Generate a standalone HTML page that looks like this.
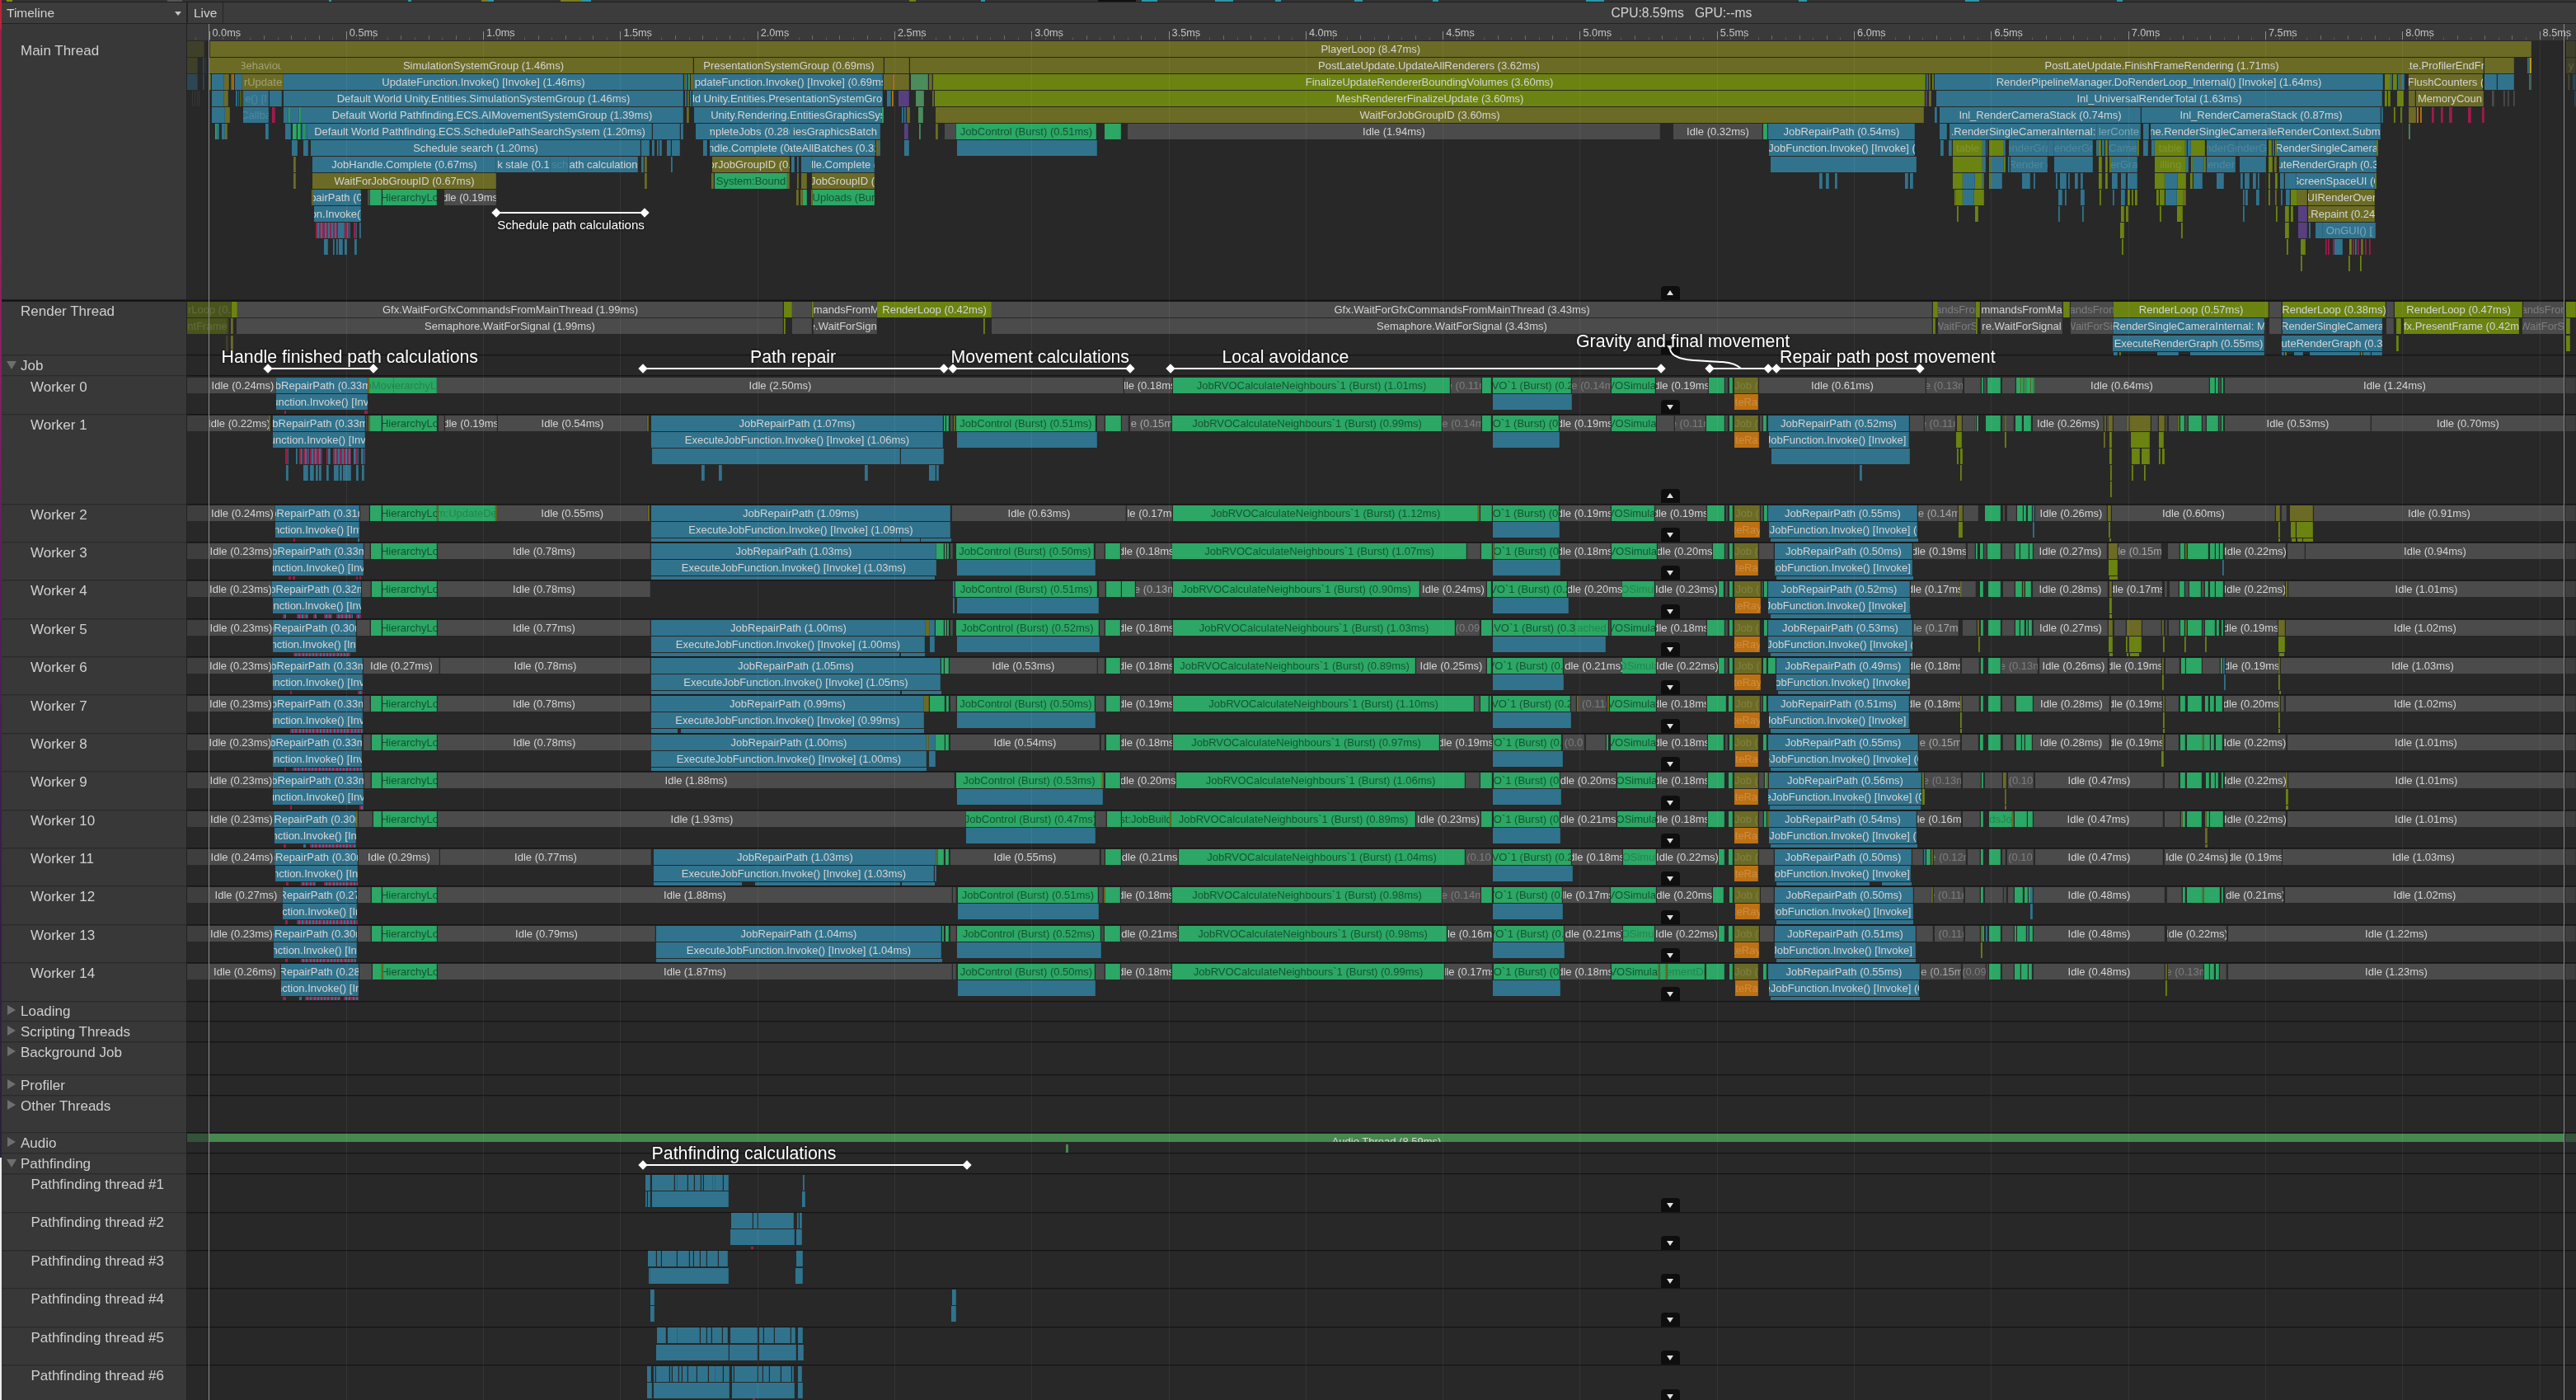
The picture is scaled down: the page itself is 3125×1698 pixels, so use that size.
<!DOCTYPE html><html><head><meta charset="utf-8"><title>Profiler Timeline</title><style>
html,body{margin:0;padding:0}
body{width:3125px;height:1698px;overflow:hidden;background:#282828;position:relative;font-family:"Liberation Sans",sans-serif;}
div,i,b,s,u{position:absolute;box-sizing:border-box}
.r{left:0;width:3125px}
.r i{top:0;height:100%;font-style:normal;font-size:13px;color:#d4d4d4;padding-bottom:1px;white-space:nowrap;overflow:hidden;display:flex;justify-content:center;align-items:center;line-height:1;box-shadow:inset -1px 0 0 rgba(0,0,0,.13)}
.r i.d{color:rgba(255,255,255,.36)}.r i.f{color:rgba(255,255,255,.14)}.r i.n{box-shadow:none}.r i.cg{color:rgba(6,36,20,.64)}.r i.cg.d{color:rgba(0,30,10,.24)}.r i.cg.e{color:rgba(6,36,20,.64)}.r i.cg.k{color:rgba(6,36,20,.64)}.r i.g2{color:rgba(255,255,255,.2)}.r i.ci.d{color:rgba(255,255,255,.27)}
.r i.e{color:rgba(255,255,255,.5)}
.r i.k{color:rgba(0,0,0,.45)}
.r.n i{box-shadow:none}
.cs1{background:repeating-linear-gradient(90deg,#9c1d4b 0,#9c1d4b 2.2px,#31738d 2.2px,#31738d 4.2px)}
.lp{left:2px;top:29px;width:224px;height:1669px;background:#383838}
.lb{left:0;font-size:17px;color:#cfcfcf;white-space:nowrap;line-height:20px;height:20px}
.sep{left:227px;width:2898px;height:2px;background:linear-gradient(#151515 0,#151515 1px,#222 1px,#222 2px)}
.sepl{left:2px;width:224px;height:2px;background:linear-gradient(#2b2b2b 0,#2b2b2b 1px,#333 1px,#333 2px)}
.an{color:#fff;font-size:21.3px;white-space:nowrap;line-height:26px;height:26px;text-shadow:0 0 2px #1c1c1c,0 0 2px #1c1c1c,0 0 3px #1c1c1c}
.ln{height:2px;background:#fff}
.dm{width:8px;height:8px;background:#fff;transform:rotate(45deg)}
.ab{left:2015px;width:23px;height:17px;background:#0e0e0e;border-radius:4px 4px 0 0}
.ab:after{content:"";position:absolute;left:6.8px;top:6px;border-left:4.7px solid transparent;border-right:4.7px solid transparent;border-top:6px solid #e0e0e0}
.ab.up:after{border-top:none;border-bottom:6px solid #e0e0e0;top:5px}
.tri{width:0;height:0}
.co{background:#6b6b25}.cb{background:#31738d}.cg{background:#2ca765}.cr{background:#6b8310}.ci{background:#4b4b4b}.cO{background:#be7113}.cp{background:#584080}.cm{background:#9c1d4b}.cy{background:#c9a000}.cM{background:#4b8c5a}.cdo{background:#40402a}.cdb{background:#2d4655}.cdi{background:#3e3e3e}.cdr{background:#48541c}.ca{background:#48874f}.cda{background:#34523a}.ck{background:#282828}</style></head><body><div id="w" style="left:0;top:0;width:3125px;height:1698px;will-change:transform">
<div style="left:0;top:0;width:2px;height:1698px;background:linear-gradient(180deg,#be2337 0,#be2337 35px,#9a1e4a 36px,#961e4e 200px,#8c1f64 420px,#5a1f5c 700px,#3a1f4c 1000px,#2a2238 1400px,#2a2238 1404px,#ececec 1404px,#ececec 1698px)"></div>
<div style="left:2px;top:0;width:3123px;height:3px;background:#333"></div>
<div style="left:2px;top:2px;width:3123px;height:1px;background:#1f1f1f"></div>
<div style="left:8px;top:0;width:7px;height:2px;background:#8a8a20"></div>
<div style="left:203px;top:0;width:18px;height:2px;background:#555"></div>
<div style="left:399px;top:0;width:3px;height:2px;background:#2f96a8"></div>
<div style="left:495px;top:0;width:4px;height:2px;background:#2f96a8"></div>
<div style="left:584px;top:0;width:8px;height:2px;background:#7a7a22"></div>
<div style="left:592px;top:0;width:7px;height:2px;background:#2f96a8"></div>
<div style="left:680px;top:0;width:26px;height:2px;background:#7a7a22"></div>
<div style="left:706px;top:0;width:11px;height:2px;background:#2f96a8"></div>
<div style="left:1103px;top:0;width:8px;height:2px;background:#6b8310"></div>
<div style="left:1190px;top:0;width:5px;height:2px;background:#2f96a8"></div>
<div style="left:1332px;top:0;width:46px;height:2px;background:#111"></div>
<div style="left:1385px;top:0;width:19px;height:2px;background:#2f96a8"></div>
<div style="left:1474px;top:0;width:22px;height:2px;background:#2f96a8"></div>
<div style="left:1547px;top:0;width:7px;height:2px;background:#2f96a8"></div>
<div style="left:1643px;top:0;width:10px;height:2px;background:#2f96a8"></div>
<div style="left:1738px;top:0;width:7px;height:2px;background:#2f96a8"></div>
<div style="left:1924px;top:0;width:22px;height:2px;background:#2f96a8"></div>
<div style="left:2182px;top:0;width:10px;height:2px;background:#2f96a8"></div>
<div style="left:2384px;top:0;width:17px;height:2px;background:#2f96a8"></div>
<div style="left:2568px;top:0;width:7px;height:2px;background:#2f96a8"></div>
<div style="left:2px;top:3px;width:3123px;height:25px;background:#3c3c3c"></div>
<div style="left:2px;top:28px;width:3123px;height:1px;background:#232323"></div>
<div style="left:8px;top:5.6px;font-size:15.5px;color:#d2d2d2;line-height:20px">Timeline</div>
<div class="tri" style="left:211.5px;top:13.5px;border-left:4.5px solid transparent;border-right:4.5px solid transparent;border-top:5px solid #c4c4c4"></div>
<div style="left:226px;top:3px;width:2px;height:25px;background:#242424"></div>
<div style="left:270px;top:3px;width:1px;height:25px;background:#242424"></div>
<div style="left:235px;top:5.6px;font-size:15.5px;color:#d2d2d2;line-height:20px">Live</div>
<div style="left:1954.5px;top:5.6px;font-size:15.6px;color:#d2d2d2;line-height:20px;white-space:pre">CPU:8.59ms   GPU:--ms</div>
<div style="left:227px;top:29px;width:2898px;height:20px;background:#3a3a3a"></div>
<div class="lp"></div>
<div style="left:226px;top:29px;width:1px;height:1669px;background:#222"></div>
<div class="sep" style="top:430px"></div>
<div class="sepl" style="top:430px"></div>
<div class="sep" style="top:455px"></div>
<div class="sepl" style="top:455px"></div>
<div class="sep" style="top:502px"></div>
<div class="sepl" style="top:502px"></div>
<div class="sep" style="top:611px"></div>
<div class="sepl" style="top:611px"></div>
<div class="sep" style="top:657px"></div>
<div class="sepl" style="top:657px"></div>
<div class="sep" style="top:703px"></div>
<div class="sepl" style="top:703px"></div>
<div class="sep" style="top:750px"></div>
<div class="sepl" style="top:750px"></div>
<div class="sep" style="top:796px"></div>
<div class="sepl" style="top:796px"></div>
<div class="sep" style="top:842px"></div>
<div class="sepl" style="top:842px"></div>
<div class="sep" style="top:889px"></div>
<div class="sepl" style="top:889px"></div>
<div class="sep" style="top:935px"></div>
<div class="sepl" style="top:935px"></div>
<div class="sep" style="top:982px"></div>
<div class="sepl" style="top:982px"></div>
<div class="sep" style="top:1028px"></div>
<div class="sepl" style="top:1028px"></div>
<div class="sep" style="top:1074px"></div>
<div class="sepl" style="top:1074px"></div>
<div class="sep" style="top:1121px"></div>
<div class="sepl" style="top:1121px"></div>
<div class="sep" style="top:1167px"></div>
<div class="sepl" style="top:1167px"></div>
<div class="sep" style="top:1214px"></div>
<div class="sepl" style="top:1214px"></div>
<div class="sep" style="top:1238px"></div>
<div class="sepl" style="top:1238px"></div>
<div class="sep" style="top:1263px"></div>
<div class="sepl" style="top:1263px"></div>
<div class="sep" style="top:1303px"></div>
<div class="sepl" style="top:1303px"></div>
<div class="sep" style="top:1328px"></div>
<div class="sepl" style="top:1328px"></div>
<div class="sep" style="top:1373px"></div>
<div class="sepl" style="top:1373px"></div>
<div class="sep" style="top:1398px"></div>
<div class="sepl" style="top:1398px"></div>
<div class="sep" style="top:1423px"></div>
<div class="sepl" style="top:1423px"></div>
<div class="sep" style="top:1470px"></div>
<div class="sepl" style="top:1470px"></div>
<div class="sep" style="top:1516px"></div>
<div class="sepl" style="top:1516px"></div>
<div class="sep" style="top:1562px"></div>
<div class="sepl" style="top:1562px"></div>
<div class="sep" style="top:1609px"></div>
<div class="sepl" style="top:1609px"></div>
<div class="sep" style="top:1655px"></div>
<div class="sepl" style="top:1655px"></div>
<div style="left:2px;top:363px;width:3123px;height:3px;background:linear-gradient(#1e1e1e 0,#1e1e1e 1px,#141414 1px,#141414 2px,#1a1a1a 2px)"></div>
<div class="r" style="top:50px;height:19px"><i class="cdo" style="left:227px;width:21px"></i><i class="co" style="left:254.5px;width:2816.5px">PlayerLoop (8.47ms)</i><i class="cdo" style="left:3113px;width:12px"></i></div>
<div class="r" style="top:70px;height:19px"><i class="cdo" style="left:227px;width:13px"></i><i class="cdb" style="left:246px;width:2px"></i><i class="cdo" style="left:248.5px;width:1.5px"></i><i class="co n" style="left:253px;width:79px"></i><i class="co" style="left:332px;width:509px">SimulationSystemGroup (1.46ms)</i><i class="co d n" style="left:293px;width:48px">Behaviou</i><i class="co" style="left:842px;width:230px">PresentationSystemGroup (0.69ms)</i><i class="co" style="left:1073px;width:30px"></i><i class="co n" style="left:1104px;width:26px"></i><i class="co n" style="left:1130px;width:1207px">PostLateUpdate.UpdateAllRenderers (3.62ms)</i><i class="co n" style="left:2337px;width:571px">PostLateUpdate.FinishFrameRendering (1.71ms)</i><i class="co n" style="left:2908px;width:14px"></i><i class="co" style="left:2922px;width:91px">PostLateUpdate.ProfilerEndFrame (0.27ms)</i><i class="co" style="left:3014px;width:36px"></i><i class="cb" style="left:3066px;width:2px"></i><i class="co" style="left:3068px;width:1px"></i><i class="cy" style="left:3069px;width:1.5px"></i><i class="cdo f" style="left:3113px;width:12px">y</i></div>
<div class="r" style="top:90px;height:19px"><i class="cdb" style="left:227px;width:13px"></i><i class="cdb" style="left:246px;width:2px"></i><i class="co" style="left:254px;width:2px"></i><i class="cb" style="left:257px;width:15px"></i><i class="co" style="left:272px;width:6px"></i><i class="co" style="left:279.5px;width:2.5px"></i><i class="cO" style="left:282px;width:2px"></i><i class="cb" style="left:284.5px;width:9.5px"></i><i class="co d" style="left:294px;width:50px">rUpdate</i><i class="cb" style="left:344px;width:485px">UpdateFunction.Invoke() [Invoke] (1.46ms)</i><i class="co" style="left:830px;width:2px"></i><i class="cb" style="left:832px;width:2px"></i><i class="cg" style="left:835px;width:1.5px"></i><i class="co" style="left:838px;width:4px"></i><i class="cb" style="left:842px;width:229px">UpdateFunction.Invoke() [Invoke] (0.69ms)</i><i class="co" style="left:1072px;width:11px"></i><i class="cO" style="left:1083px;width:1.5px"></i><i class="co" style="left:1084.5px;width:18.5px"></i><i class="cM" style="left:1105px;width:21px"></i><i class="co" style="left:1127px;width:4px"></i><i class="cr" style="left:1132px;width:1204px">FinalizeUpdateRendererBoundingVolumes (3.60ms)</i><i class="cb" style="left:2337px;width:2px"></i><i class="co" style="left:2340px;width:2px"></i><i class="cr" style="left:2344px;width:2px"></i><i class="cb" style="left:2347px;width:544px">RenderPipelineManager.DoRenderLoop_Internal() [Invoke] (1.64ms)</i><i class="cr" style="left:2893px;width:7px"></i><i class="cb" style="left:2900px;width:2px"></i><i class="cr" style="left:2903px;width:5px"></i><i class="cb" style="left:2909px;width:2px"></i><i class="co" style="left:2911px;width:1.5px"></i><i class="cb" style="left:2913px;width:4px"></i><i class="co" style="left:2922px;width:90px">FlushCounters (</i><i class="cb" style="left:3014px;width:15px"></i><i class="cb" style="left:3030px;width:20px"></i><i class="cb" style="left:3068px;width:2px"></i><i class="co" style="left:3070px;width:1px"></i><i class="cdo" style="left:3115px;width:3px"></i><i class="cdb" style="left:3121px;width:4px"></i></div>
<div class="r" style="top:110px;height:19px"><i class="cdi" style="left:233px;width:1px"></i><i class="cdi" style="left:236px;width:1px"></i><i class="cdi" style="left:238.5px;width:1px"></i><i class="cdi" style="left:240.5px;width:1px"></i><i class="cb" style="left:257px;width:15px"></i><i class="co" style="left:272px;width:5px"></i><i class="cb" style="left:286px;width:2px"></i><i class="cb" style="left:288.5px;width:1.5px"></i><i class="cr" style="left:290.5px;width:1.5px"></i><i class="co" style="left:292.5px;width:1.5px"></i><i class="cb f" style="left:295px;width:31px">e() [I</i><i class="cb" style="left:326.5px;width:15.5px"></i><i class="cb" style="left:344px;width:485px">Default World Unity.Entities.SimulationSystemGroup (1.46ms)</i><i class="cb" style="left:831px;width:2px"></i><i class="co" style="left:834px;width:2px"></i><i class="cb" style="left:837px;width:2px"></i><i class="cb" style="left:840px;width:231px">Default World Unity.Entities.PresentationSystemGroup (0.69ms)</i><i class="cb" style="left:1076px;width:5px"></i><i class="cO" style="left:1082px;width:2px"></i><i class="cp" style="left:1090px;width:13px"></i><i class="cM" style="left:1111px;width:10px"></i><i class="co" style="left:1131px;width:2px"></i><i class="cr" style="left:1134px;width:1201px">MeshRendererFinalizeUpdate (3.60ms)</i><i class="cp" style="left:2336px;width:2px"></i><i class="co" style="left:2340px;width:3px"></i><i class="cb" style="left:2349px;width:541px">Inl_UniversalRenderTotal (1.63ms)</i><i class="cr" style="left:2893px;width:3px"></i><i class="cr" style="left:2897px;width:3px"></i><i class="cr" style="left:2908px;width:8px"></i><i class="co" style="left:2922px;width:8px"></i><i class="co" style="left:2931px;width:82px">MemoryCoun</i><i class="ci" style="left:3023px;width:3px"></i><i class="ci" style="left:3037px;width:2px"></i><i class="ci" style="left:3042px;width:2px"></i><i class="ci" style="left:3049px;width:2px"></i><i class="cdb" style="left:3123px;width:2px"></i></div>
<div class="r" style="top:130px;height:19px"><i class="cb" style="left:257px;width:16px"></i><i class="co" style="left:273px;width:6px"></i><i class="cb f" style="left:295px;width:31px">Callba</i><i class="cm" style="left:330px;width:4px"></i><i class="cb" style="left:344px;width:6px"></i><i class="cg" style="left:350px;width:1.5px"></i><i class="cb" style="left:352px;width:11px"></i><i class="cg" style="left:363px;width:2px"></i><i class="cb" style="left:365px;width:464px">Default World Pathfinding.ECS.AIMovementSystemGroup (1.39ms)</i><i class="co" style="left:833px;width:3px"></i><i class="cb n" style="left:842px;width:19px"></i><i class="cb" style="left:861px;width:209px">Default World Unity.Rendering.EntitiesGraphicsSystem (0.68ms)</i><i class="cg" style="left:1070px;width:2px"></i><i class="cb" style="left:1094px;width:2px"></i><i class="cb" style="left:1097px;width:2px"></i><i class="cb" style="left:1099.5px;width:1.5px"></i><i class="co" style="left:1101px;width:3px"></i><i class="cM" style="left:1114px;width:6px"></i><i class="co" style="left:1135px;width:1199px">WaitForJobGroupID (3.60ms)</i><i class="cb" style="left:2347px;width:3px"></i><i class="cb" style="left:2353px;width:244px">Inl_RenderCameraStack (0.74ms)</i><i class="cb" style="left:2598px;width:290px">Inl_RenderCameraStack (0.87ms)</i><i class="cb" style="left:2889px;width:2px"></i><i class="cr" style="left:2904px;width:2px"></i><i class="cr" style="left:2912px;width:2px"></i><i class="co" style="left:2922px;width:9px"></i><i class="cO" style="left:2932px;width:2px"></i><i class="cO" style="left:2936px;width:2px"></i><i class="cm" style="left:2950px;width:3px"></i><i class="cm" style="left:2961px;width:3px"></i><i class="cm" style="left:2971px;width:4px"></i><i class="cm" style="left:2994px;width:4px"></i><i class="cm" style="left:3011px;width:3px"></i></div>
<div class="r" style="top:150px;height:19px"><i class="cg" style="left:261px;width:2px"></i><i class="cb" style="left:263px;width:3px"></i><i class="cb" style="left:269px;width:4px"></i><i class="co" style="left:273px;width:3px"></i><i class="cb" style="left:322px;width:4px"></i><i class="cb" style="left:346px;width:7px"></i><i class="cg" style="left:355px;width:5px"></i><i class="cg" style="left:361px;width:4px"></i><i class="cb" style="left:366px;width:2px"></i><i class="cg" style="left:368px;width:1.5px"></i><i class="cb" style="left:370px;width:3px"></i><i class="cb" style="left:373px;width:418px">Default World Pathfinding.ECS.SchedulePathSearchSystem (1.20ms)</i><i class="cb" style="left:792px;width:33px"></i><i class="cb" style="left:826px;width:3px"></i><i class="cb n" style="left:844px;width:17px"></i><i class="cb" style="left:861px;width:97px">CompleteJobs (0.28ms)</i><i class="cb" style="left:958px;width:110px">iesGraphicsBatch</i><i class="cp" style="left:1097px;width:5px"></i><i class="cM" style="left:1115px;width:2px"></i><i class="co" style="left:1135px;width:3px"></i><i class="ci" style="left:1146px;width:14px"></i><i class="cg" style="left:1160px;width:170px">JobControl (Burst) (0.51ms)</i><i class="cg" style="left:1340px;width:20px"></i><i class="ci" style="left:1368px;width:646px">Idle (1.94ms)</i><i class="ci" style="left:2030px;width:108px">Idle (0.32ms)</i><i class="cg" style="left:2139px;width:5px"></i><i class="cb" style="left:2145px;width:178px">JobRepairPath (0.54ms)</i><i class="cb" style="left:2353px;width:9px"></i><i class="cb" style="left:2365px;width:179px">.RenderSingleCameraInternal:</i><i class="cb d" style="left:2544px;width:53px">lerConte</i><i class="cb" style="left:2600px;width:7px"></i><i class="cb" style="left:2609px;width:143px">ne.RenderSingleCameraI</i><i class="cb" style="left:2752px;width:136px">leRenderContext.Subm</i><i class="cM" style="left:2922px;width:2px"></i></div>
<div class="r" style="top:170px;height:19px"><i class="cb" style="left:354px;width:7px"></i><i class="cb" style="left:368px;width:6px"></i><i class="cb" style="left:377px;width:400px">Schedule search (1.20ms)</i><i class="cb" style="left:777.5px;width:10.5px"></i><i class="cb" style="left:791px;width:2.5px"></i><i class="cb" style="left:797px;width:2px"></i><i class="cb" style="left:800px;width:3px"></i><i class="cb" style="left:809px;width:5px"></i><i class="cb" style="left:815px;width:10px"></i><i class="cb" style="left:853px;width:5px"></i><i class="cb" style="left:861px;width:97px">JobHandle.Complete (0.28ms)</i><i class="cb" style="left:958px;width:104px">UpdateAllBatches (0.31ms)</i><i class="co" style="left:1063px;width:3px"></i><i class="cb" style="left:1066px;width:2px"></i><i class="cb" style="left:1097px;width:6px"></i><i class="cb" style="left:1161px;width:170px"></i><i class="cb" style="left:2146px;width:177px">ExecuteJobFunction.Invoke() [Invoke] (0.54ms)</i><i class="cb" style="left:2354px;width:4px"></i><i class="cb" style="left:2364px;width:4px"></i><i class="cr f" style="left:2369px;width:36px">table</i><i class="cb" style="left:2405px;width:4px"></i><i class="cb" style="left:2410px;width:1px"></i><i class="cr" style="left:2413px;width:18px"></i><i class="cb" style="left:2431px;width:2px"></i><i class="cb f" style="left:2437px;width:47.5px">enderGra</i><i class="cb" style="left:2485px;width:6.7px"></i><i class="cb f" style="left:2492px;width:47px">enderGr</i><i class="cb" style="left:2543px;width:3px"></i><i class="cr" style="left:2546px;width:3px"></i><i class="cb" style="left:2550px;width:3px"></i><i class="cr" style="left:2554px;width:3px"></i><i class="cb f" style="left:2558px;width:35px">Came</i><i class="cr" style="left:2593px;width:2px"></i><i class="cb" style="left:2600px;width:6px"></i><i class="cb" style="left:2609.6px;width:4.7px"></i><i class="cr f" style="left:2614.3px;width:37.1px">table</i><i class="cb" style="left:2651.4px;width:1.6px"></i><i class="cb" style="left:2654px;width:4px"></i><i class="cr" style="left:2658px;width:17px"></i><i class="cb f" style="left:2677px;width:37px">nderGr</i><i class="cb f" style="left:2714px;width:36px">nderG</i><i class="cr" style="left:2752px;width:4px"></i><i class="cb" style="left:2757px;width:2px"></i><i class="cr" style="left:2760px;width:2px"></i><i class="cb" style="left:2762px;width:121px">RenderSingleCamera</i><i class="cr" style="left:2883px;width:1.5px"></i></div>
<div class="r" style="top:190px;height:19px"><i class="co" style="left:356px;width:3px"></i><i class="cb" style="left:379px;width:223px">JobHandle.Complete (0.67ms)</i><i class="cb" style="left:602px;width:66px">k stale (0.1</i><i class="cb f" style="left:668px;width:22px">sch</i><i class="cb" style="left:690px;width:84px">ath calculation</i><i class="cb" style="left:778px;width:3px"></i><i class="co" style="left:782px;width:3px"></i><i class="cb" style="left:814px;width:2px"></i><i class="co" style="left:864px;width:94px">WaitForJobGroupID (0.28ms)</i><i class="cb" style="left:960px;width:4px"></i><i class="cb" style="left:967px;width:2px"></i><i class="cb" style="left:972px;width:13px"></i><i class="cb" style="left:985px;width:76px">JobHandle.Complete (0.23ms)</i><i class="cb" style="left:2148px;width:177px"></i><i class="cr" style="left:2369px;width:36px"></i><i class="cb" style="left:2405px;width:4px"></i><i class="cr" style="left:2412.6px;width:2.4px"></i><i class="cb" style="left:2415px;width:16px"></i><i class="cr" style="left:2431px;width:2px"></i><i class="cb" style="left:2436px;width:2px"></i><i class="cb f" style="left:2439px;width:45px">Render (</i><i class="cb" style="left:2492px;width:47px"></i><i class="cr" style="left:2546px;width:4px"></i><i class="cr" style="left:2554px;width:2.5px"></i><i class="cr" style="left:2559px;width:2px"></i><i class="cb f" style="left:2561px;width:32px">erGra</i><i class="cr f" style="left:2614.3px;width:37.7px">illing</i><i class="cb" style="left:2652px;width:2.6px"></i><i class="cr" style="left:2657.6px;width:2.4px"></i><i class="cb" style="left:2660px;width:14px"></i><i class="cr" style="left:2674px;width:2px"></i><i class="cb f" style="left:2677px;width:35px">ender</i><i class="cb" style="left:2717px;width:32px"></i><i class="cr" style="left:2752px;width:5px"></i><i class="co" style="left:2759px;width:3px"></i><i class="cb" style="left:2765px;width:118px">ExecuteRenderGraph (0.35ms)</i></div>
<div class="r" style="top:210px;height:19px"><i class="co" style="left:356px;width:3px"></i><i class="co" style="left:379px;width:223px">WaitForJobGroupID (0.67ms)</i><i class="co" style="left:782px;width:3px"></i><i class="co" style="left:863px;width:3px"></i><i class="cg k" style="left:867px;width:88px">System:Bound</i><i class="co" style="left:955px;width:3px"></i><i class="co" style="left:967px;width:2px"></i><i class="co" style="left:972px;width:7px"></i><i class="co" style="left:985px;width:76px">WaitForJobGroupID (0.23ms)</i><i class="cb" style="left:2207px;width:4px"></i><i class="cb" style="left:2215px;width:4px"></i><i class="cb" style="left:2226px;width:3px"></i><i class="cb" style="left:2311px;width:4px"></i><i class="cb" style="left:2317px;width:4px"></i><i class="cr" style="left:2369px;width:12px"></i><i class="cb" style="left:2381px;width:15px"></i><i class="cr" style="left:2396px;width:9px"></i><i class="cb" style="left:2405px;width:2px"></i><i class="cr" style="left:2413px;width:2px"></i><i class="cb" style="left:2415px;width:14px"></i><i class="cb" style="left:2453px;width:10px"></i><i class="cb" style="left:2467px;width:2px"></i><i class="cb" style="left:2494px;width:2px"></i><i class="cb" style="left:2499px;width:8px"></i><i class="cb" style="left:2509px;width:2px"></i><i class="cb" style="left:2517px;width:4px"></i><i class="cb" style="left:2524px;width:3px"></i><i class="cr" style="left:2546px;width:3.6px"></i><i class="cr" style="left:2554px;width:3px"></i><i class="cb" style="left:2562px;width:7px"></i><i class="cb" style="left:2573px;width:6px"></i><i class="cb" style="left:2581px;width:12px"></i><i class="cr" style="left:2614px;width:12px"></i><i class="cb" style="left:2626px;width:16px"></i><i class="cr" style="left:2642px;width:10px"></i><i class="cr" style="left:2657px;width:3px"></i><i class="cb" style="left:2661px;width:11px"></i><i class="cb" style="left:2689px;width:9px"></i><i class="cb" style="left:2718px;width:3px"></i><i class="cb" style="left:2723px;width:6px"></i><i class="cb" style="left:2733px;width:4px"></i><i class="cb" style="left:2739px;width:1.5px"></i><i class="cr" style="left:2752px;width:2px"></i><i class="cr" style="left:2760px;width:3px"></i><i class="cb" style="left:2766px;width:5px"></i><i class="cb" style="left:2772px;width:14px"></i><i class="cb" style="left:2786px;width:95px">ScreenSpaceUI (0</i><i class="cr" style="left:2881px;width:2px"></i></div>
<div class="r" style="top:230px;height:19px"><i class="co" style="left:378px;width:2px"></i><i class="cb" style="left:380px;width:58px">JobRepairPath (0.17ms)</i><i class="ci" style="left:446px;width:3px"></i><i class="cg" style="left:449px;width:14px"></i><i class="cg" style="left:464px;width:66px">HierarchyLo</i><i class="ci" style="left:539px;width:63px">Idle (0.19ms)</i><i class="co" style="left:966px;width:3px"></i><i class="co" style="left:971px;width:3px"></i><i class="cg" style="left:974px;width:5px"></i><i class="co" style="left:984px;width:2px"></i><i class="cg" style="left:986px;width:75px">Uploads (Bur</i><i class="cr" style="left:2371px;width:1.5px"></i><i class="cr" style="left:2373px;width:8px"></i><i class="cb" style="left:2381px;width:14px"></i><i class="cr" style="left:2395px;width:12px"></i><i class="cb" style="left:2497px;width:5px"></i><i class="cb" style="left:2505px;width:2px"></i><i class="cb" style="left:2524px;width:5px"></i><i class="cr" style="left:2547px;width:2px"></i><i class="cb" style="left:2563px;width:2px"></i><i class="cb" style="left:2573px;width:5px"></i><i class="cr" style="left:2581px;width:3.3px"></i><i class="cr" style="left:2586px;width:2px"></i><i class="cr" style="left:2590px;width:3px"></i><i class="cr" style="left:2616px;width:3px"></i><i class="cr" style="left:2620px;width:6px"></i><i class="cb" style="left:2627px;width:14px"></i><i class="cr" style="left:2641px;width:8px"></i><i class="co" style="left:2649px;width:3px"></i><i class="cb" style="left:2721px;width:2px"></i><i class="cb" style="left:2724px;width:3px"></i><i class="cb" style="left:2737px;width:4px"></i><i class="cr" style="left:2752px;width:2px"></i><i class="co" style="left:2760px;width:2px"></i><i class="cb" style="left:2767px;width:2px"></i><i class="cb" style="left:2773px;width:5px"></i><i class="cr" style="left:2779px;width:8px"></i><i class="co" style="left:2787px;width:12px"></i><i class="co" style="left:2800px;width:81px">UIRenderOver</i></div>
<div class="r" style="top:250px;height:19px"><i class="cb" style="left:381px;width:57px">ExecuteJobFunction.Invoke() [Invoke] (0.17ms)</i><i class="cr" style="left:2374px;width:2px"></i><i class="cr" style="left:2396px;width:4px"></i><i class="cb" style="left:2497px;width:2px"></i><i class="cb" style="left:2526px;width:2px"></i><i class="cr" style="left:2573px;width:4px"></i><i class="cr" style="left:2579px;width:3px"></i><i class="cr" style="left:2620px;width:2px"></i><i class="cr" style="left:2641px;width:7px"></i><i class="cb" style="left:2721px;width:1.5px"></i><i class="cr" style="left:2761px;width:2px"></i><i class="cr" style="left:2772px;width:5px"></i><i class="cr" style="left:2779px;width:3px"></i><i class="cp" style="left:2788px;width:11px"></i><i class="co" style="left:2800px;width:81px">.Repaint (0.24</i></div>
<div class="r" style="top:270px;height:19px"><i class="cs1" style="left:383px;width:26.5px"></i><i class="cb" style="left:409.5px;width:8.5px"></i><i class="cm" style="left:418px;width:3px"></i><i class="cb" style="left:421px;width:1.6px"></i><i class="cm" style="left:422.6px;width:1.4px"></i><i class="cb" style="left:424px;width:0.7px"></i><i class="cm" style="left:429px;width:3px"></i><i class="cb" style="left:432px;width:1px"></i><i class="cb" style="left:436px;width:2px"></i><i class="cr" style="left:2572px;width:5px"></i><i class="cr" style="left:2646px;width:2px"></i><i class="cr" style="left:2772px;width:5px"></i><i class="cp" style="left:2788px;width:11px"></i><i class="cb" style="left:2801px;width:2px"></i><i class="cb" style="left:2809px;width:9px"></i><i class="cb d" style="left:2818px;width:64px">OnGUI() [</i></div>
<div class="r" style="top:290px;height:19px"><i class="cb" style="left:393px;width:5px"></i><i class="cb" style="left:404px;width:2px"></i><i class="cb" style="left:408px;width:2px"></i><i class="cb" style="left:411px;width:5px"></i><i class="cb" style="left:418px;width:3px"></i><i class="cb" style="left:430px;width:3px"></i><i class="cr" style="left:2574px;width:1.5px"></i><i class="cr" style="left:2774px;width:2px"></i><i class="cr" style="left:2791px;width:6px"></i><i class="cm" style="left:2821px;width:1.5px"></i><i class="cm" style="left:2824px;width:1.5px"></i><i class="cm" style="left:2830px;width:2px"></i><i class="cb" style="left:2832px;width:10px"></i><i class="cr" style="left:2850px;width:3px"></i><i class="cm" style="left:2854px;width:2px"></i><i class="cb" style="left:2857px;width:2px"></i><i class="cm" style="left:2860px;width:1.5px"></i><i class="co" style="left:2864px;width:3px"></i><i class="cm" style="left:2869px;width:2px"></i><i class="cm" style="left:2874px;width:2px"></i></div>
<div class="r" style="top:310px;height:19px"><i class="cr" style="left:2791px;width:1.5px"></i><i class="cr" style="left:2849px;width:2px"></i><i class="cr" style="left:2863px;width:2px"></i></div>
<div class="r" style="top:366px;height:19px"><i class="cdr f" style="left:227px;width:54px">rLoop (0.</i><i class="cr" style="left:281px;width:7px"></i><i class="ci" style="left:288px;width:662px">Gfx.WaitForGfxCommandsFromMainThread (1.99ms)</i><i class="cr" style="left:951px;width:10px"></i><i class="ci" style="left:961px;width:24px"></i><i class="cr" style="left:985px;width:1.5px"></i><i class="ci" style="left:986.5px;width:77.5px">Gfx.WaitForGfxCommandsFromMainThread (0.23ms)</i><i class="cr" style="left:1064px;width:139px">RenderLoop (0.42ms)</i><i class="ci" style="left:1203px;width:1141px">Gfx.WaitForGfxCommandsFromMainThread (3.43ms)</i><i class="cr" style="left:2345px;width:6px"></i><i class="ci d" style="left:2351px;width:46px">andsFror</i><i class="cr" style="left:2397px;width:5px"></i><i class="ci" style="left:2403px;width:99px">mmandsFromMa</i><i class="cr" style="left:2503px;width:8px"></i><i class="ci d" style="left:2512px;width:52px">andsFron</i><i class="cr" style="left:2564px;width:188px">RenderLoop (0.57ms)</i><i class="ci" style="left:2753px;width:15px"></i><i class="cr" style="left:2769px;width:125px">RenderLoop (0.38ms)</i><i class="ci" style="left:2895px;width:9px"></i><i class="cr" style="left:2905px;width:155px">RenderLoop (0.47ms)</i><i class="ci d" style="left:3061px;width:50px">andsFron</i><i class="cr" style="left:3113px;width:12px"></i></div>
<div class="r" style="top:386px;height:19px"><i class="cdr f" style="left:227px;width:49px">ntFrame</i><i class="cdo" style="left:276px;width:1.5px"></i><i class="co" style="left:280px;width:3px"></i><i class="ci" style="left:287px;width:663px">Semaphore.WaitForSignal (1.99ms)</i><i class="cr" style="left:951px;width:2px"></i><i class="ci" style="left:961px;width:24px"></i><i class="ci" style="left:986.5px;width:77.5px">Semaphore.WaitForSignal (0.23ms)</i><i class="cr" style="left:1193px;width:2px"></i><i class="ci" style="left:1203px;width:1141px">Semaphore.WaitForSignal (3.43ms)</i><i class="cr" style="left:2345px;width:2.5px"></i><i class="ci d" style="left:2351px;width:46px">WaitForSi</i><i class="cr" style="left:2397px;width:1.5px"></i><i class="ci" style="left:2403px;width:99px">re.WaitForSignal</i><i class="ci d" style="left:2512px;width:52px">WaitForSig</i><i class="cb" style="left:2564px;width:183px">RenderSingleCameraInternal: M</i><i class="ci" style="left:2753px;width:15px"></i><i class="cb" style="left:2769px;width:121px">RenderSingleCamera</i><i class="ci" style="left:2895px;width:9px"></i><i class="cr" style="left:2907px;width:6px"></i><i class="cr" style="left:2916px;width:140px">fx.PresentFrame (0.42m</i><i class="ci d" style="left:3060px;width:51px">WaitForSi</i><i class="cr" style="left:3113px;width:5px"></i></div>
<div class="r" style="top:407px;height:19px"><i class="cdo" style="left:274px;width:3px"></i><i class="co" style="left:280px;width:3px"></i><i class="cb" style="left:2563px;width:184px">ExecuteRenderGraph (0.55ms)</i><i class="cb" style="left:2768px;width:122px">ExecuteRenderGraph (0.35ms)</i><i class="cr" style="left:2907px;width:3px"></i><i class="cr" style="left:3113px;width:5px"></i></div>
<div class="r" style="top:427px;height:3.5px"><i class="cb" style="left:2564px;width:5px"></i><i class="cr" style="left:2571px;width:2px"></i><i class="cb" style="left:2617px;width:26px"></i><i class="cb" style="left:2657px;width:90px"></i><i class="cb" style="left:2768px;width:3px"></i><i class="cr" style="left:2772px;width:2px"></i><i class="cb" style="left:2783px;width:11px"></i><i class="cb" style="left:2802px;width:61px"></i><i class="cr" style="left:2864px;width:2px"></i><i class="cb" style="left:2867px;width:9px"></i><i class="cb" style="left:2877px;width:13px"></i></div>
<div class="r" style="top:458px;height:19px"><i class="cdi" style="left:227px;width:26px"></i><i class="ci" style="left:254px;width:81px">Idle (0.24ms)</i><i class="cb" style="left:335px;width:111px">JobRepairPath (0.33ms)</i><i class="co" style="left:446px;width:2px"></i><i class="cg d" style="left:448px;width:30px">bMove</i><i class="cg d" style="left:478px;width:52px">erarchyL</i><i class="ci" style="left:530px;width:833px">Idle (2.50ms)</i><i class="ci" style="left:1364px;width:58px">Idle (0.18ms)</i><i class="cg" style="left:1423px;width:336px">JobRVOCalculateNeighbours`1 (Burst) (1.01ms)</i><i class="ci d" style="left:1760px;width:37px">Idle (0.11ms)</i><i class="cg" style="left:1798px;width:11px"></i><i class="cg" style="left:1811px;width:95px">JobRVO`1 (Burst) (0.29ms)</i><i class="ci d" style="left:1907px;width:47px">Idle (0.14ms)</i><i class="cg e" style="left:1955px;width:53px">VOSimulat</i><i class="ci" style="left:2009px;width:63px">Idle (0.19ms)</i><i class="cg" style="left:2073px;width:19px"></i><i class="ci" style="left:2093px;width:3px"></i><i class="cg" style="left:2098px;width:4px"></i><i class="co f" style="left:2104px;width:29px">Job (</i><i class="ci" style="left:2134px;width:202px">Idle (0.61ms)</i><i class="ci d" style="left:2337px;width:44px">Idle (0.13ms)</i><i class="ci" style="left:2383px;width:20px"></i><i class="cg" style="left:2404px;width:2px"></i><i class="ci" style="left:2407px;width:3px"></i><i class="cg" style="left:2411px;width:16px"></i><i class="ci" style="left:2429px;width:16px"></i><i class="cg" style="left:2446px;width:12.5px"></i><i class="co" style="left:2451.3px;width:1px"></i><i class="co" style="left:2454.3px;width:1px"></i><i class="co" style="left:2456.3px;width:0.7px"></i><i class="cg" style="left:2459px;width:8.5px"></i><i class="co" style="left:2463.3px;width:0.9px"></i><i class="co" style="left:2465.5px;width:0.8px"></i><i class="ci" style="left:2468px;width:212px">Idle (0.64ms)</i><i class="cg" style="left:2681px;width:6px"></i><i class="cg" style="left:2688px;width:3px"></i><i class="ci" style="left:2692px;width:2px"></i><i class="cg" style="left:2695px;width:2px"></i><i class="ci" style="left:2699px;width:412px">Idle (1.24ms)</i><i class="cdi" style="left:3112px;width:13px"></i></div>
<div class="r" style="top:478px;height:19px"><i class="cb" style="left:335px;width:111px">ExecuteJobFunction.Invoke() [Invoke] (0.33ms)</i><i class="cb" style="left:1811px;width:96px"></i><i class="cO g2" style="left:2104px;width:29px">teRa</i></div>
<div class="r n" style="top:498px;height:4px"><i class="cm" style="left:345px;width:2px"></i><i class="cm" style="left:442px;width:4px"></i></div>
<div class="r" style="top:504px;height:19px"><i class="cdi" style="left:227px;width:26px"></i><i class="ci" style="left:254px;width:72px">Idle (0.22ms)</i><i class="co" style="left:326px;width:2px"></i><i class="cb" style="left:331px;width:112px">JobRepairPath (0.33ms)</i><i class="ci" style="left:444px;width:2px"></i><i class="co" style="left:447px;width:2px"></i><i class="cg" style="left:449px;width:14px"></i><i class="cg" style="left:464px;width:66px">HierarchyLo</i><i class="ci" style="left:532px;width:7px"></i><i class="ci" style="left:540px;width:63px">Idle (0.19ms)</i><i class="ci" style="left:604px;width:181px">Idle (0.54ms)</i><i class="co" style="left:785px;width:2px"></i><i class="cb" style="left:790px;width:354px">JobRepairPath (1.07ms)</i><i class="cg" style="left:1145px;width:2px"></i><i class="cg" style="left:1148px;width:3px"></i><i class="ci" style="left:1153px;width:3px"></i><i class="co" style="left:1157px;width:2px"></i><i class="cg" style="left:1160px;width:169px">JobControl (Burst) (0.51ms)</i><i class="ci" style="left:1331px;width:9px"></i><i class="cg" style="left:1341px;width:19px"></i><i class="ci" style="left:1361px;width:8px"></i><i class="ci e" style="left:1371px;width:50px">Idle (0.15ms)</i><i class="cg" style="left:1422px;width:327px">JobRVOCalculateNeighbours`1 (Burst) (0.99ms)</i><i class="ci d" style="left:1750px;width:47px">Idle (0.14ms)</i><i class="cg" style="left:1798px;width:11px"></i><i class="cg" style="left:1811px;width:80px">JobRVO`1 (Burst) (0.24ms)</i><i class="ci" style="left:1892px;width:62px">Idle (0.19ms)</i><i class="cg e" style="left:1955px;width:54px">VOSimulat</i><i class="ci" style="left:2010px;width:21px"></i><i class="ci d" style="left:2032px;width:37px">Idle (0.11ms)</i><i class="cg" style="left:2070px;width:22px"></i><i class="ci" style="left:2093px;width:3px"></i><i class="cg" style="left:2098px;width:4px"></i><i class="co f" style="left:2104px;width:29px">Job (</i><i class="ci" style="left:2135px;width:3px"></i><i class="cg" style="left:2139px;width:4px"></i><i class="cb" style="left:2145px;width:171px">JobRepairPath (0.52ms)</i><i class="ci" style="left:2317px;width:17px"></i><i class="ci d" style="left:2335px;width:37px">Idle (0.11ms)</i><i class="co" style="left:2374px;width:6px"></i><i class="ci" style="left:2381px;width:14.5px"></i><i class="co" style="left:2396px;width:1.2px"></i><i class="cg" style="left:2397.5px;width:2.5px"></i><i class="cg" style="left:2409px;width:18px"></i><i class="ci" style="left:2429px;width:3px"></i><i class="co" style="left:2432px;width:2px"></i><i class="ci" style="left:2434px;width:9px"></i><i class="cg" style="left:2445px;width:8px"></i><i class="cg" style="left:2455px;width:9px"></i><i class="ci" style="left:2466px;width:86px">Idle (0.26ms)</i><i class="co" style="left:2553px;width:2px"></i><i class="ci" style="left:2556px;width:2px"></i><i class="co" style="left:2558px;width:5px"></i><i class="ci" style="left:2564px;width:16px"></i><i class="co" style="left:2580px;width:2px"></i><i class="ci" style="left:2582px;width:2px"></i><i class="co" style="left:2584px;width:25px"></i><i class="ci" style="left:2610px;width:8px"></i><i class="co" style="left:2619px;width:7px"></i><i class="ci" style="left:2627px;width:2px"></i><i class="ci" style="left:2631px;width:11px"></i><i class="co" style="left:2642px;width:2px"></i><i class="cg" style="left:2645px;width:5px"></i><i class="ci" style="left:2651px;width:3px"></i><i class="cg" style="left:2655px;width:16px"></i><i class="ci" style="left:2672px;width:4px"></i><i class="cg" style="left:2677px;width:14px"></i><i class="ci" style="left:2692px;width:2px"></i><i class="cg" style="left:2695px;width:2px"></i><i class="ci" style="left:2699px;width:177px">Idle (0.53ms)</i><i class="ci" style="left:2877px;width:234px">Idle (0.70ms)</i><i class="cdi" style="left:3112px;width:13px"></i></div>
<div class="r" style="top:524px;height:19px"><i class="cb" style="left:331px;width:112px">ExecuteJobFunction.Invoke() [Invoke] (0.33ms)</i><i class="cb" style="left:790px;width:354px">ExecuteJobFunction.Invoke() [Invoke] (1.06ms)</i><i class="cb" style="left:1161px;width:170px"></i><i class="cb" style="left:1811px;width:81px"></i><i class="cO g2" style="left:2104px;width:30px">teRa</i><i class="cb" style="left:2146px;width:170px">ExecuteJobFunction.Invoke() [Invoke] (0.52ms)</i><i class="cr" style="left:2373px;width:7px"></i><i class="cr" style="left:2432px;width:2px"></i><i class="co" style="left:2552px;width:2px"></i><i class="cr" style="left:2559px;width:3px"></i><i class="cr" style="left:2585px;width:23px"></i><i class="cr" style="left:2619px;width:6px"></i></div>
<div class="r" style="top:544px;height:19px"><i class="cm" style="left:346px;width:3.2px"></i><i class="cb" style="left:349.2px;width:0.8px"></i><i class="cb" style="left:359px;width:2.1px"></i><i class="cs1" style="left:362.8px;width:4.1px"></i><i class="cs1" style="left:367.8px;width:7.2px"></i><i class="cs1" style="left:375.9px;width:15.1px"></i><i class="cm" style="left:395.9px;width:2.1px"></i><i class="cb" style="left:398px;width:3px"></i><i class="cs1" style="left:404px;width:22px"></i><i class="cb" style="left:429px;width:3px"></i><i class="cm" style="left:432px;width:2px"></i><i class="cb" style="left:434px;width:1px"></i><i class="cb" style="left:438px;width:3px"></i><i class="cm" style="left:441px;width:1px"></i><i class="cb" style="left:442px;width:1.1px"></i><i class="cb" style="left:791px;width:301px"></i><i class="cb" style="left:1093px;width:52px"></i><i class="cb" style="left:2149px;width:168px"></i><i class="cr" style="left:2374px;width:2px"></i><i class="cr" style="left:2378px;width:3px"></i><i class="cr" style="left:2559px;width:3px"></i><i class="cr" style="left:2586px;width:10px"></i><i class="cr" style="left:2598px;width:10px"></i><i class="cr" style="left:2619px;width:2px"></i><i class="cr" style="left:2623px;width:3px"></i></div>
<div class="r" style="top:564px;height:19px"><i class="cb" style="left:346.8px;width:3.2px"></i><i class="cb" style="left:368px;width:6.2px"></i><i class="cb" style="left:375.9px;width:5.3px"></i><i class="cb" style="left:382.9px;width:3.2px"></i><i class="cb" style="left:387px;width:3px"></i><i class="cb" style="left:395.9px;width:3.2px"></i><i class="cb" style="left:404.9px;width:6px"></i><i class="cb" style="left:411.9px;width:2.8px"></i><i class="cb" style="left:416px;width:10.3px"></i><i class="cb" style="left:431.8px;width:3.2px"></i><i class="cb" style="left:439px;width:3px"></i><i class="cb" style="left:851px;width:4px"></i><i class="cb" style="left:872px;width:4px"></i><i class="cb" style="left:1049px;width:4px"></i><i class="cb" style="left:1127px;width:8px"></i><i class="cb" style="left:1136px;width:3px"></i><i class="cb" style="left:2256px;width:3px"></i><i class="cr" style="left:2378px;width:2px"></i><i class="cr" style="left:2560px;width:2px"></i><i class="cr" style="left:2586px;width:1.5px"></i><i class="cr" style="left:2601px;width:2px"></i></div>
<div class="r" style="top:584px;height:19px"><i class="cr" style="left:2560px;width:2px"></i></div>
<div class="r" style="top:613px;height:19px"><i class="cdi" style="left:227px;width:26px"></i><i class="ci" style="left:254px;width:80px">Idle (0.24ms)</i><i class="cb" style="left:334px;width:102px">JobRepairPath (0.31ms)</i><i class="ci" style="left:437px;width:11px"></i><i class="cg" style="left:449px;width:14px"></i><i class="cg" style="left:464px;width:66px">HierarchyLo</i><i class="co" style="left:530px;width:1.5px"></i><i class="cg d" style="left:531.5px;width:69.5px">m:UpdateDe</i><i class="co" style="left:601px;width:1.5px"></i><i class="ci" style="left:602.5px;width:183.5px">Idle (0.55ms)</i><i class="co" style="left:786px;width:2px"></i><i class="cb" style="left:790px;width:363px">JobRepairPath (1.09ms)</i><i class="ci" style="left:1155px;width:211px">Idle (0.63ms)</i><i class="ci" style="left:1367px;width:55px">Idle (0.17ms)</i><i class="cg" style="left:1423px;width:370px">JobRVOCalculateNeighbours`1 (Burst) (1.12ms)</i><i class="co" style="left:1793px;width:2px"></i><i class="cg" style="left:1796px;width:14px"></i><i class="cg" style="left:1811px;width:80px">JobRVO`1 (Burst) (0.24ms)</i><i class="ci" style="left:1892px;width:62px">Idle (0.19ms)</i><i class="cg e" style="left:1955px;width:52px">VOSimulat</i><i class="ci" style="left:2008px;width:62px">Idle (0.19ms)</i><i class="cg" style="left:2071px;width:21px"></i><i class="ci" style="left:2094px;width:2px"></i><i class="cg" style="left:2098px;width:4px"></i><i class="co f" style="left:2104px;width:31px">Job (</i><i class="ci" style="left:2136px;width:3px"></i><i class="cg" style="left:2140px;width:4px"></i><i class="cb" style="left:2145px;width:181px">JobRepairPath (0.55ms)</i><i class="ci e" style="left:2327px;width:48px">Idle (0.14ms)</i><i class="co" style="left:2376px;width:5px"></i><i class="ci" style="left:2382px;width:18px"></i><i class="cg" style="left:2408px;width:19px"></i><i class="ci" style="left:2430px;width:2px"></i><i class="ci" style="left:2435px;width:11px"></i><i class="cg" style="left:2447px;width:7px"></i><i class="cg" style="left:2455px;width:3px"></i><i class="cg" style="left:2460px;width:5px"></i><i class="cb" style="left:2466px;width:2px"></i><i class="ci" style="left:2469px;width:87px">Idle (0.26ms)</i><i class="co" style="left:2557px;width:4px"></i><i class="ci" style="left:2562px;width:198px">Idle (0.60ms)</i><i class="co" style="left:2761px;width:5px"></i><i class="ci" style="left:2768px;width:6px"></i><i class="co" style="left:2778px;width:28px"></i><i class="ci" style="left:2807px;width:304px">Idle (0.91ms)</i><i class="cdi" style="left:3112px;width:13px"></i></div>
<div class="r" style="top:633px;height:19px"><i class="cb" style="left:334px;width:102px">ExecuteJobFunction.Invoke() [Invoke] (0.31ms)</i><i class="cb" style="left:790px;width:363px">ExecuteJobFunction.Invoke() [Invoke] (1.09ms)</i><i class="cb" style="left:1811px;width:81px"></i><i class="cO g2" style="left:2104px;width:31px">teRay</i><i class="cb" style="left:2146px;width:180px">ExecuteJobFunction.Invoke() [Invoke] (0.55ms)</i><i class="cr" style="left:2376px;width:5px"></i><i class="cb" style="left:2466px;width:1.5px"></i><i class="cr" style="left:2558px;width:2px"></i><i class="cr" style="left:2764px;width:2px"></i><i class="cr" style="left:2779px;width:6px"></i><i class="cr" style="left:2786px;width:20px"></i></div>
<div class="r n" style="top:653px;height:4px"><i class="cm" style="left:356px;width:2px"></i><i class="cb" style="left:434px;width:2px"></i><i class="cb" style="left:790px;width:302px"></i><i class="cb" style="left:1093px;width:23px"></i><i class="cb" style="left:1117px;width:37px"></i><i class="cb" style="left:2148px;width:179px"></i><i class="cr" style="left:2559px;width:2px"></i><i class="cr" style="left:2764px;width:2px"></i><i class="cr" style="left:2780px;width:5px"></i><i class="cr" style="left:2787px;width:6px"></i><i class="cr" style="left:2794px;width:12px"></i></div>
<div class="r" style="top:659px;height:19px"><i class="cdi" style="left:227px;width:26px"></i><i class="ci" style="left:254px;width:77px">Idle (0.23ms)</i><i class="cb" style="left:331px;width:110px">JobRepairPath (0.33ms)</i><i class="ci" style="left:442px;width:7px"></i><i class="cg" style="left:450px;width:13px"></i><i class="cg" style="left:464px;width:66px">HierarchyLo</i><i class="ci" style="left:531px;width:258px">Idle (0.78ms)</i><i class="cb" style="left:790px;width:346px">JobRepairPath (1.03ms)</i><i class="cg" style="left:1136px;width:9px"></i><i class="cg" style="left:1146px;width:2px"></i><i class="cg" style="left:1149px;width:2px"></i><i class="ci" style="left:1153px;width:3px"></i><i class="cg" style="left:1160px;width:167px">JobControl (Burst) (0.50ms)</i><i class="ci" style="left:1329px;width:11px"></i><i class="cg" style="left:1341px;width:18px"></i><i class="ci" style="left:1360px;width:62px">Idle (0.18ms)</i><i class="cg" style="left:1422px;width:357px">JobRVOCalculateNeighbours`1 (Burst) (1.07ms)</i><i class="ci" style="left:1780px;width:16px"></i><i class="cg" style="left:1797px;width:13px"></i><i class="co" style="left:1811px;width:1.5px"></i><i class="cg" style="left:1812.5px;width:78.5px">JobRVO`1 (Burst) (0.24ms)</i><i class="ci" style="left:1892px;width:62px">Idle (0.18ms)</i><i class="cg e" style="left:1955px;width:55px">VOSimulat</i><i class="ci" style="left:2011px;width:66px">Idle (0.20ms)</i><i class="cg" style="left:2078px;width:14px"></i><i class="ci" style="left:2093px;width:3px"></i><i class="cg" style="left:2098px;width:4px"></i><i class="co f" style="left:2104px;width:29px">Job (</i><i class="ci" style="left:2134px;width:18px"></i><i class="cb" style="left:2153px;width:167px">JobRepairPath (0.50ms)</i><i class="ci" style="left:2321px;width:64px">Idle (0.19ms)</i><i class="ci" style="left:2387px;width:9px"></i><i class="cg" style="left:2397px;width:2px"></i><i class="cg" style="left:2402px;width:4px"></i><i class="ci" style="left:2407px;width:3px"></i><i class="cg" style="left:2411px;width:16px"></i><i class="ci" style="left:2429px;width:15px"></i><i class="cg" style="left:2445px;width:5px"></i><i class="cg" style="left:2451px;width:10px"></i><i class="cg" style="left:2462px;width:4px"></i><i class="ci" style="left:2467px;width:89px">Idle (0.27ms)</i><i class="co" style="left:2558px;width:11px"></i><i class="ci e" style="left:2570px;width:52px">Idle (0.15ms)</i><i class="ci" style="left:2630px;width:14px"></i><i class="cg" style="left:2645px;width:5px"></i><i class="co" style="left:2651px;width:2px"></i><i class="cg" style="left:2654px;width:25px"></i><i class="cg" style="left:2681px;width:6px"></i><i class="cg" style="left:2688px;width:4px"></i><i class="cg" style="left:2693px;width:4px"></i><i class="ci" style="left:2699px;width:74px">Idle (0.22ms)</i><i class="ci" style="left:2775px;width:21px"></i><i class="ci" style="left:2797px;width:314px">Idle (0.94ms)</i><i class="cdi" style="left:3112px;width:13px"></i></div>
<div class="r" style="top:679px;height:19px"><i class="cb" style="left:331px;width:110px">ExecuteJobFunction.Invoke() [Invoke] (0.33ms)</i><i class="cb" style="left:790px;width:346px">ExecuteJobFunction.Invoke() [Invoke] (1.03ms)</i><i class="cb" style="left:1161px;width:168px"></i><i class="cb" style="left:1811px;width:82px"></i><i class="cO g2" style="left:2105px;width:28px">teRa</i><i class="cb" style="left:2153px;width:167px">ExecuteJobFunction.Invoke() [Invoke] (0.50ms)</i><i class="cr" style="left:2558px;width:11px"></i><i class="cb" style="left:2696px;width:1.5px"></i></div>
<div class="r n" style="top:699px;height:4px"><i class="cm" style="left:350px;width:3px"></i><i class="cm" style="left:355px;width:3px"></i><i class="cm" style="left:432px;width:2px"></i><i class="cm" style="left:436px;width:2px"></i><i class="cb" style="left:790px;width:344px"></i><i class="cb" style="left:2155px;width:166px"></i><i class="cr" style="left:2559px;width:10px"></i></div>
<div class="r" style="top:705px;height:19px"><i class="cdi" style="left:227px;width:26px"></i><i class="ci" style="left:254px;width:76px">Idle (0.23ms)</i><i class="cb" style="left:330px;width:108px">JobRepairPath (0.32ms)</i><i class="ci" style="left:439px;width:11px"></i><i class="cg" style="left:451px;width:12px"></i><i class="cg" style="left:464px;width:66px">HierarchyLo</i><i class="ci" style="left:531px;width:258px">Idle (0.78ms)</i><i class="cb" style="left:1156px;width:2px"></i><i class="cg" style="left:1159px;width:172px">JobControl (Burst) (0.51ms)</i><i class="ci" style="left:1333px;width:8px"></i><i class="cg" style="left:1342px;width:18px"></i><i class="cg" style="left:1361px;width:16px"></i><i class="ci e" style="left:1378px;width:44px">Idle (0.13ms)</i><i class="cg" style="left:1423px;width:299px">JobRVOCalculateNeighbours`1 (Burst) (0.90ms)</i><i class="ci" style="left:1723px;width:80px">Idle (0.24ms)</i><i class="cg" style="left:1804px;width:5px"></i><i class="cg" style="left:1811px;width:90px">JobRVO`1 (Burst) (0.27ms)</i><i class="ci" style="left:1902px;width:66px">Idle (0.20ms)</i><i class="cg d" style="left:1968px;width:39px">OSimul</i><i class="ci" style="left:2008px;width:76px">Idle (0.23ms)</i><i class="cg" style="left:2085px;width:6px"></i><i class="ci" style="left:2093px;width:3px"></i><i class="cg" style="left:2098px;width:4px"></i><i class="co f" style="left:2104px;width:32px">Job (</i><i class="ci" style="left:2137px;width:2px"></i><i class="cg" style="left:2140px;width:4px"></i><i class="cb" style="left:2145px;width:172px">JobRepairPath (0.52ms)</i><i class="ci" style="left:2318px;width:60px">Idle (0.17ms)</i><i class="co" style="left:2378px;width:1.5px"></i><i class="ci" style="left:2380px;width:17px"></i><i class="cg" style="left:2402px;width:4px"></i><i class="cg" style="left:2412px;width:15px"></i><i class="ci" style="left:2430px;width:14px"></i><i class="cg" style="left:2445px;width:8px"></i><i class="co" style="left:2454px;width:2px"></i><i class="cg" style="left:2457px;width:7px"></i><i class="ci" style="left:2466px;width:91px">Idle (0.28ms)</i><i class="co" style="left:2559px;width:3px"></i><i class="ci" style="left:2563px;width:60px">Idle (0.17ms)</i><i class="ci" style="left:2626px;width:3px"></i><i class="ci" style="left:2632px;width:11px"></i><i class="cg" style="left:2644px;width:6px"></i><i class="ci" style="left:2651px;width:4px"></i><i class="cg" style="left:2656px;width:14px"></i><i class="ci" style="left:2671px;width:3px"></i><i class="cg" style="left:2675px;width:4px"></i><i class="cg" style="left:2681px;width:6px"></i><i class="cg" style="left:2688px;width:9px"></i><i class="ci" style="left:2699px;width:73px">Idle (0.22ms)</i><i class="co" style="left:2773px;width:2px"></i><i class="ci" style="left:2776px;width:335px">Idle (1.01ms)</i><i class="cdi" style="left:3112px;width:13px"></i></div>
<div class="r" style="top:725px;height:19px"><i class="cb" style="left:331px;width:107px">ExecuteJobFunction.Invoke() [Invoke] (0.32ms)</i><i class="cb" style="left:1156px;width:2px"></i><i class="cb" style="left:1161px;width:172px"></i><i class="cb" style="left:1811px;width:92px"></i><i class="cO g2" style="left:2105px;width:31px">teRay</i><i class="cb" style="left:2145px;width:172px">ExecuteJobFunction.Invoke() [Invoke] (0.52ms)</i><i class="cr" style="left:2559px;width:3px"></i></div>
<div class="r n" style="top:745px;height:5px"><i class="cs1" style="left:343px;width:4px"></i><i class="cs1" style="left:360px;width:14px"></i><i class="cs1" style="left:380px;width:4px"></i><i class="cs1" style="left:393px;width:10px"></i><i class="cs1" style="left:408px;width:20px"></i><i class="cs1" style="left:432px;width:6px"></i><i class="cb" style="left:2148px;width:170px"></i><i class="cr" style="left:2559px;width:3px"></i></div>
<div class="r" style="top:752px;height:19px"><i class="cdi" style="left:227px;width:26px"></i><i class="ci" style="left:254px;width:77px">Idle (0.23ms)</i><i class="cb" style="left:331px;width:101px">JobRepairPath (0.30ms)</i><i class="ci" style="left:433px;width:16px"></i><i class="cg" style="left:450px;width:13px"></i><i class="cg" style="left:464px;width:66px">HierarchyLo</i><i class="ci" style="left:531px;width:258px">Idle (0.77ms)</i><i class="cb" style="left:790px;width:333px">JobRepairPath (1.00ms)</i><i class="co" style="left:1123px;width:5px"></i><i class="cb" style="left:1128px;width:6px"></i><i class="cg" style="left:1135px;width:10px"></i><i class="cg" style="left:1146px;width:2px"></i><i class="cg" style="left:1149px;width:2px"></i><i class="ci" style="left:1153px;width:3px"></i><i class="cg" style="left:1160px;width:173px">JobControl (Burst) (0.52ms)</i><i class="ci" style="left:1334px;width:6px"></i><i class="cg" style="left:1341px;width:18px"></i><i class="ci" style="left:1360px;width:62px">Idle (0.18ms)</i><i class="cg" style="left:1423px;width:342px">JobRVOCalculateNeighbours`1 (Burst) (1.03ms)</i><i class="ci d" style="left:1766px;width:29px">(0.09</i><i class="cg" style="left:1797px;width:13px"></i><i class="cg" style="left:1811px;width:100px">JobRVO`1 (Burst) (0.30ms)</i><i class="cg d" style="left:1911px;width:40px">ached</i><i class="ci" style="left:1952px;width:2px"></i><i class="cg e" style="left:1955px;width:53px">VOSimulat</i><i class="ci" style="left:2009px;width:61px">Idle (0.18ms)</i><i class="cg" style="left:2071px;width:21px"></i><i class="ci" style="left:2093px;width:3px"></i><i class="cg" style="left:2098px;width:4px"></i><i class="co f" style="left:2104px;width:31px">Job (</i><i class="cg" style="left:2140px;width:4px"></i><i class="cb" style="left:2145px;width:175px">JobRepairPath (0.53ms)</i><i class="ci e" style="left:2321px;width:55px">Idle (0.17ms)</i><i class="ci" style="left:2381px;width:17px"></i><i class="co" style="left:2399px;width:2px"></i><i class="cg" style="left:2403px;width:3px"></i><i class="cg" style="left:2412px;width:15px"></i><i class="ci" style="left:2429px;width:15px"></i><i class="cg" style="left:2445px;width:5px"></i><i class="cg" style="left:2451px;width:5px"></i><i class="cg" style="left:2458px;width:2px"></i><i class="cg" style="left:2461px;width:4px"></i><i class="ci" style="left:2467px;width:90px">Idle (0.27ms)</i><i class="co" style="left:2558px;width:5px"></i><i class="ci" style="left:2565px;width:14px"></i><i class="co" style="left:2580px;width:18px"></i><i class="ci" style="left:2599px;width:23px"></i><i class="co" style="left:2623px;width:2px"></i><i class="ci" style="left:2627px;width:2px"></i><i class="ci" style="left:2631px;width:13px"></i><i class="cg" style="left:2645px;width:5px"></i><i class="co" style="left:2651px;width:2px"></i><i class="cg" style="left:2654px;width:17px"></i><i class="ci" style="left:2672px;width:2px"></i><i class="cg" style="left:2675px;width:12px"></i><i class="cg" style="left:2689px;width:3px"></i><i class="cg" style="left:2695px;width:2px"></i><i class="ci" style="left:2699px;width:64px">Idle (0.19ms)</i><i class="co" style="left:2764px;width:8px"></i><i class="ci" style="left:2773px;width:338px">Idle (1.02ms)</i><i class="cdi" style="left:3112px;width:13px"></i></div>
<div class="r" style="top:772px;height:19px"><i class="cb" style="left:331px;width:101px">ExecuteJobFunction.Invoke() [Invoke] (0.30ms)</i><i class="cb" style="left:790px;width:332px">ExecuteJobFunction.Invoke() [Invoke] (1.00ms)</i><i class="cb" style="left:1128px;width:6px"></i><i class="cb" style="left:1161px;width:173px"></i><i class="cb" style="left:1811px;width:137px"></i><i class="cO g2" style="left:2104px;width:31px">teRay</i><i class="cb" style="left:2145px;width:175px">ExecuteJobFunction.Invoke() [Invoke] (0.53ms)</i><i class="cr" style="left:2400px;width:1.5px"></i><i class="cr" style="left:2558px;width:5px"></i><i class="cr" style="left:2579px;width:2px"></i><i class="cr" style="left:2583px;width:15px"></i><i class="cr" style="left:2624px;width:1.5px"></i><i class="cr" style="left:2650px;width:2px"></i><i class="cr" style="left:2675px;width:2px"></i><i class="cr" style="left:2764px;width:8px"></i></div>
<div class="r n" style="top:792px;height:4px"><i class="cs1" style="left:356px;width:69px"></i><i class="cb" style="left:790px;width:301px"></i><i class="cb" style="left:1093px;width:29px"></i><i class="cb" style="left:2148px;width:172px"></i><i class="cr" style="left:2559px;width:4px"></i><i class="cr" style="left:2580px;width:2px"></i><i class="cr" style="left:2584px;width:11px"></i><i class="cr" style="left:2765px;width:6px"></i></div>
<div class="r" style="top:798px;height:19px"><i class="cdi" style="left:227px;width:26px"></i><i class="ci" style="left:254px;width:76px">Idle (0.23ms)</i><i class="cb" style="left:330px;width:110px">JobRepairPath (0.33ms)</i><i class="ci" style="left:441px;width:92px">Idle (0.27ms)</i><i class="ci" style="left:534px;width:255px">Idle (0.78ms)</i><i class="cb" style="left:790px;width:351px">JobRepairPath (1.05ms)</i><i class="cg" style="left:1142px;width:3px"></i><i class="cg" style="left:1146px;width:5px"></i><i class="ci" style="left:1152px;width:179px">Idle (0.53ms)</i><i class="ci" style="left:1332px;width:8px"></i><i class="cg" style="left:1342px;width:17px"></i><i class="ci" style="left:1360px;width:62px">Idle (0.18ms)</i><i class="cg" style="left:1424px;width:293px">JobRVOCalculateNeighbours`1 (Burst) (0.89ms)</i><i class="ci" style="left:1718px;width:85px">Idle (0.25ms)</i><i class="cg" style="left:1804px;width:5px"></i><i class="cg" style="left:1811px;width:85px">JobRVO`1 (Burst) (0.26ms)</i><i class="ci" style="left:1897px;width:71px">Idle (0.21ms)</i><i class="cg d" style="left:1968px;width:41px">OSimula</i><i class="ci" style="left:2010px;width:74px">Idle (0.22ms)</i><i class="cg" style="left:2085px;width:7px"></i><i class="ci" style="left:2093px;width:3px"></i><i class="cg" style="left:2098px;width:4px"></i><i class="co f" style="left:2104px;width:33px">Job (</i><i class="cg" style="left:2139px;width:4px"></i><i class="cg" style="left:2145px;width:9px"></i><i class="cb" style="left:2155px;width:162px">JobRepairPath (0.49ms)</i><i class="ci" style="left:2318px;width:60px">Idle (0.18ms)</i><i class="ci" style="left:2380px;width:21px"></i><i class="cg" style="left:2403px;width:3px"></i><i class="cg" style="left:2412px;width:15px"></i><i class="ci d" style="left:2428px;width:44px">Idle (0.13ms)</i><i class="ci" style="left:2474px;width:83px">Idle (0.26ms)</i><i class="ci" style="left:2559px;width:63px">Idle (0.19ms)</i><i class="co" style="left:2623px;width:2px"></i><i class="ci" style="left:2627px;width:17px"></i><i class="cg" style="left:2646px;width:5px"></i><i class="cg" style="left:2652px;width:19px"></i><i class="ci" style="left:2672px;width:21px"></i><i class="cg" style="left:2694px;width:2px"></i><i class="cb" style="left:2697px;width:2px"></i><i class="ci" style="left:2700px;width:64px">Idle (0.19ms)</i><i class="co" style="left:2764px;width:2px"></i><i class="ci" style="left:2767px;width:344px">Idle (1.03ms)</i><i class="cdi" style="left:3112px;width:13px"></i></div>
<div class="r" style="top:818px;height:19px"><i class="cb" style="left:331px;width:109px">ExecuteJobFunction.Invoke() [Invoke] (0.33ms)</i><i class="cb" style="left:790px;width:351px">ExecuteJobFunction.Invoke() [Invoke] (1.05ms)</i><i class="cb" style="left:1811px;width:86px"></i><i class="cO g2" style="left:2104px;width:32px">teRay</i><i class="cb" style="left:2155px;width:162px">ExecuteJobFunction.Invoke() [Invoke] (0.49ms)</i><i class="cr" style="left:2623px;width:2px"></i><i class="cb" style="left:2698px;width:2px"></i><i class="cr" style="left:2764px;width:2px"></i></div>
<div class="r n" style="top:838px;height:4px"><i class="cm" style="left:352px;width:2px"></i><i class="cs1" style="left:434px;width:6px"></i><i class="cb" style="left:790px;width:302px"></i><i class="cb" style="left:1094px;width:48px"></i><i class="cb" style="left:2157px;width:160px"></i><i class="cr" style="left:2765px;width:1.5px"></i></div>
<div class="r" style="top:844px;height:19px"><i class="cdi" style="left:227px;width:26px"></i><i class="ci" style="left:254px;width:76px">Idle (0.23ms)</i><i class="cb" style="left:331px;width:109px">JobRepairPath (0.33ms)</i><i class="ci" style="left:441px;width:8px"></i><i class="cg" style="left:450px;width:13px"></i><i class="cg" style="left:464px;width:66px">HierarchyLo</i><i class="ci" style="left:531px;width:258px">Idle (0.78ms)</i><i class="cb" style="left:790px;width:331px">JobRepairPath (0.99ms)</i><i class="co" style="left:1121px;width:6px"></i><i class="cg" style="left:1128px;width:18px"></i><i class="cg" style="left:1148px;width:3px"></i><i class="ci" style="left:1153px;width:7px"></i><i class="cg" style="left:1161px;width:167px">JobControl (Burst) (0.50ms)</i><i class="ci" style="left:1329px;width:11px"></i><i class="cg" style="left:1342px;width:17px"></i><i class="ci" style="left:1360px;width:62px">Idle (0.19ms)</i><i class="cg" style="left:1423px;width:365px">JobRVOCalculateNeighbours`1 (Burst) (1.10ms)</i><i class="ci" style="left:1789px;width:6px"></i><i class="cg" style="left:1796px;width:10px"></i><i class="cg" style="left:1807px;width:2px"></i><i class="cg" style="left:1811px;width:94px">JobRVO`1 (Burst) (0.28ms)</i><i class="ci" style="left:1906px;width:6px"></i><i class="co" style="left:1913px;width:1.5px"></i><i class="ci d" style="left:1915px;width:34px">Idle (0.11ms)</i><i class="co" style="left:1950px;width:1.5px"></i><i class="cg e" style="left:1953px;width:56px">VOSimulat</i><i class="ci" style="left:2010px;width:60px">Idle (0.18ms)</i><i class="cg" style="left:2071px;width:23px"></i><i class="cg" style="left:2097px;width:5px"></i><i class="co f" style="left:2104px;width:31px">Job (</i><i class="ci" style="left:2136px;width:2px"></i><i class="cg" style="left:2139px;width:4px"></i><i class="cb" style="left:2145px;width:171px">JobRepairPath (0.51ms)</i><i class="ci" style="left:2317px;width:61px">Idle (0.18ms)</i><i class="co" style="left:2378px;width:2px"></i><i class="ci" style="left:2381px;width:20px"></i><i class="cg" style="left:2403px;width:3px"></i><i class="cg" style="left:2412px;width:15px"></i><i class="ci" style="left:2429px;width:15px"></i><i class="cg" style="left:2446px;width:20px"></i><i class="ci" style="left:2467px;width:92px">Idle (0.28ms)</i><i class="ci" style="left:2561px;width:62px">Idle (0.19ms)</i><i class="co" style="left:2624px;width:2px"></i><i class="ci" style="left:2627px;width:16px"></i><i class="cg" style="left:2645px;width:6px"></i><i class="cg" style="left:2654px;width:17px"></i><i class="cg" style="left:2675px;width:4px"></i><i class="cg" style="left:2681px;width:5px"></i><i class="cg" style="left:2688px;width:8px"></i><i class="ci" style="left:2698px;width:66px">Idle (0.20ms)</i><i class="co" style="left:2764px;width:2px"></i><i class="ci" style="left:2767px;width:4px"></i><i class="ci" style="left:2773px;width:338px">Idle (1.02ms)</i><i class="cdi" style="left:3112px;width:13px"></i></div>
<div class="r" style="top:864px;height:19px"><i class="cb" style="left:331px;width:109px">ExecuteJobFunction.Invoke() [Invoke] (0.33ms)</i><i class="cb" style="left:790px;width:331px">ExecuteJobFunction.Invoke() [Invoke] (0.99ms)</i><i class="cb" style="left:1161px;width:168px"></i><i class="cb" style="left:1811px;width:95px"></i><i class="cO g2" style="left:2104px;width:31px">teRay</i><i class="cb" style="left:2146px;width:170px">ExecuteJobFunction.Invoke() [Invoke] (0.51ms)</i><i class="cr" style="left:2378px;width:2px"></i><i class="cr" style="left:2624px;width:2px"></i><i class="cr" style="left:2764px;width:2px"></i></div>
<div class="r n" style="top:884px;height:5px"><i class="cs1" style="left:352px;width:88px"></i><i class="cb" style="left:790px;width:32px"></i><i class="cb" style="left:826px;width:295px"></i><i class="cb" style="left:2148px;width:169px"></i><i class="cr" style="left:2378px;width:2px"></i><i class="cr" style="left:2624px;width:2px"></i><i class="cr" style="left:2764px;width:2px"></i></div>
<div class="r" style="top:891px;height:19px"><i class="cdi" style="left:227px;width:26px"></i><i class="ci" style="left:254px;width:75px">Idle (0.23ms)</i><i class="cb" style="left:329px;width:110px">JobRepairPath (0.33ms)</i><i class="ci" style="left:441px;width:9px"></i><i class="cg" style="left:451px;width:12px"></i><i class="cg" style="left:464px;width:66px">HierarchyLo</i><i class="ci" style="left:531px;width:259px">Idle (0.78ms)</i><i class="cb" style="left:790px;width:334px">JobRepairPath (1.00ms)</i><i class="co" style="left:1124px;width:3px"></i><i class="cb" style="left:1127px;width:8px"></i><i class="cg" style="left:1135px;width:11px"></i><i class="cg" style="left:1147px;width:4px"></i><i class="ci" style="left:1153px;width:181px">Idle (0.54ms)</i><i class="ci" style="left:1336px;width:4px"></i><i class="cg" style="left:1342px;width:17px"></i><i class="ci" style="left:1360px;width:62px">Idle (0.18ms)</i><i class="cg" style="left:1423px;width:323px">JobRVOCalculateNeighbours`1 (Burst) (0.97ms)</i><i class="ci" style="left:1747px;width:63px">Idle (0.19ms)</i><i class="cg" style="left:1811px;width:83px">JobRVO`1 (Burst) (0.25ms)</i><i class="ci d" style="left:1896px;width:26px">(0.0</i><i class="ci" style="left:1924px;width:24px"></i><i class="cg" style="left:1949px;width:2px"></i><i class="cg e" style="left:1954px;width:55px">VOSimulat</i><i class="ci" style="left:2010px;width:61px">Idle (0.18ms)</i><i class="cg" style="left:2072px;width:19px"></i><i class="ci" style="left:2093px;width:3px"></i><i class="cg" style="left:2098px;width:4px"></i><i class="co f" style="left:2104px;width:29px">Job (</i><i class="cg" style="left:2139px;width:4px"></i><i class="cb" style="left:2145px;width:182px">JobRepairPath (0.55ms)</i><i class="ci e" style="left:2328px;width:50px">Idle (0.15ms)</i><i class="ci" style="left:2380px;width:20px"></i><i class="cg" style="left:2402px;width:4px"></i><i class="cg" style="left:2412px;width:15px"></i><i class="ci" style="left:2430px;width:14px"></i><i class="cg" style="left:2446px;width:6px"></i><i class="cg" style="left:2453px;width:3px"></i><i class="cg" style="left:2457px;width:8px"></i><i class="ci" style="left:2466px;width:93px">Idle (0.28ms)</i><i class="ci" style="left:2561px;width:62px">Idle (0.19ms)</i><i class="co" style="left:2623px;width:2px"></i><i class="ci" style="left:2627px;width:16px"></i><i class="cg" style="left:2645px;width:6px"></i><i class="cg" style="left:2653px;width:19px"></i><i class="co" style="left:2672px;width:2px"></i><i class="cg" style="left:2674px;width:7px"></i><i class="cg" style="left:2682px;width:4px"></i><i class="cg" style="left:2688px;width:8px"></i><i class="ci" style="left:2698px;width:75px">Idle (0.22ms)</i><i class="ci" style="left:2775px;width:336px">Idle (1.01ms)</i><i class="cdi" style="left:3112px;width:13px"></i></div>
<div class="r" style="top:911px;height:19px"><i class="cb" style="left:331px;width:108px">ExecuteJobFunction.Invoke() [Invoke] (0.33ms)</i><i class="cb" style="left:790px;width:334px">ExecuteJobFunction.Invoke() [Invoke] (1.00ms)</i><i class="cb" style="left:1127px;width:8px"></i><i class="cb" style="left:1811px;width:85px"></i><i class="cO g2" style="left:2105px;width:28px">teRa</i><i class="cb" style="left:2146px;width:181px">ExecuteJobFunction.Invoke() [Invoke] (0.55ms)</i><i class="cr" style="left:2622px;width:3px"></i></div>
<div class="r n" style="top:931px;height:4px"><i class="cm" style="left:345px;width:2px"></i><i class="cs1" style="left:355px;width:84px"></i><i class="cb" style="left:790px;width:334px"></i><i class="cb" style="left:2148px;width:179px"></i></div>
<div class="r" style="top:937px;height:19px"><i class="cdi" style="left:227px;width:26px"></i><i class="ci" style="left:254px;width:77px">Idle (0.23ms)</i><i class="cb" style="left:331px;width:110px">JobRepairPath (0.33ms)</i><i class="ci" style="left:442px;width:8px"></i><i class="cg" style="left:451px;width:12px"></i><i class="cg" style="left:464px;width:66px">HierarchyLo</i><i class="ci" style="left:531px;width:627px">Idle (1.88ms)</i><i class="cg" style="left:1160px;width:177px">JobControl (Burst) (0.53ms)</i><i class="co" style="left:1337px;width:2px"></i><i class="cg" style="left:1341px;width:18px"></i><i class="ci" style="left:1360px;width:66px">Idle (0.20ms)</i><i class="cg" style="left:1427px;width:350px">JobRVOCalculateNeighbours`1 (Burst) (1.06ms)</i><i class="ci" style="left:1778px;width:17px"></i><i class="cg" style="left:1796px;width:14px"></i><i class="cg" style="left:1812px;width:80px">JobRVO`1 (Burst) (0.24ms)</i><i class="ci" style="left:1893px;width:68px">Idle (0.20ms)</i><i class="cg e" style="left:1962px;width:47px">OSimula</i><i class="ci" style="left:2010px;width:61px">Idle (0.18ms)</i><i class="cg" style="left:2072px;width:20px"></i><i class="cg" style="left:2097px;width:5px"></i><i class="co f" style="left:2104px;width:29px">Job (</i><i class="ci" style="left:2134px;width:6px"></i><i class="cg" style="left:2141px;width:2px"></i><i class="co" style="left:2143px;width:2px"></i><i class="cb" style="left:2146px;width:185px">JobRepairPath (0.56ms)</i><i class="cr" style="left:2332px;width:2px"></i><i class="ci d" style="left:2335px;width:44px">Idle (0.13ms)</i><i class="ci" style="left:2381px;width:22px"></i><i class="cg" style="left:2404px;width:2px"></i><i class="ci" style="left:2408px;width:21px"></i><i class="co" style="left:2430px;width:4px"></i><i class="ci d" style="left:2436px;width:31px">(0.10</i><i class="ci" style="left:2469px;width:155px">Idle (0.47ms)</i><i class="ci" style="left:2626px;width:17px"></i><i class="cg" style="left:2645px;width:6px"></i><i class="cg" style="left:2653px;width:18px"></i><i class="cg" style="left:2676px;width:4px"></i><i class="cg" style="left:2682px;width:5px"></i><i class="cg" style="left:2688px;width:3px"></i><i class="cg" style="left:2695px;width:2px"></i><i class="ci" style="left:2699px;width:74px">Idle (0.22ms)</i><i class="co" style="left:2773px;width:2px"></i><i class="ci" style="left:2776px;width:335px">Idle (1.01ms)</i><i class="cdi" style="left:3112px;width:13px"></i></div>
<div class="r" style="top:957px;height:19px"><i class="cb" style="left:331px;width:110px">ExecuteJobFunction.Invoke() [Invoke] (0.33ms)</i><i class="cb" style="left:1161px;width:177px"></i><i class="cb" style="left:1811px;width:83px"></i><i class="cO g2" style="left:2104px;width:29px">teRa</i><i class="cb" style="left:2145px;width:186px">ExecuteJobFunction.Invoke() [Invoke] (0.56ms)</i><i class="cr" style="left:2332px;width:3px"></i><i class="co" style="left:2432px;width:2px"></i><i class="cr" style="left:2773px;width:3px"></i></div>
<div class="r n" style="top:977px;height:5px"><i class="cm" style="left:352px;width:2px"></i><i class="cs1" style="left:436px;width:5px"></i><i class="cb" style="left:2147px;width:183px"></i><i class="co" style="left:2432px;width:2px"></i><i class="cr" style="left:2773px;width:3px"></i></div>
<div class="r" style="top:984px;height:19px"><i class="cdi" style="left:227px;width:26px"></i><i class="ci" style="left:254px;width:78px">Idle (0.23ms)</i><i class="cb" style="left:332px;width:100px">JobRepairPath (0.30ms)</i><i class="co" style="left:432px;width:2px"></i><i class="ci" style="left:435px;width:17px"></i><i class="cg" style="left:453px;width:10px"></i><i class="cg" style="left:464px;width:66px">HierarchyLo</i><i class="ci" style="left:531px;width:641px">Idle (1.93ms)</i><i class="cg" style="left:1172px;width:156px">JobControl (Burst) (0.47ms)</i><i class="ci" style="left:1329px;width:13px"></i><i class="cg" style="left:1343px;width:17px"></i><i class="cg e" style="left:1361px;width:58px">st:JobBuild</i><i class="co" style="left:1419px;width:1.5px"></i><i class="cg" style="left:1421px;width:296px">JobRVOCalculateNeighbours`1 (Burst) (0.89ms)</i><i class="ci" style="left:1718px;width:78px">Idle (0.23ms)</i><i class="cg" style="left:1797px;width:13px"></i><i class="cg" style="left:1812px;width:80px">JobRVO`1 (Burst) (0.24ms)</i><i class="ci" style="left:1893px;width:68px">Idle (0.21ms)</i><i class="cg e" style="left:1962px;width:47px">OSimula</i><i class="ci" style="left:2010px;width:61px">Idle (0.18ms)</i><i class="cg" style="left:2072px;width:20px"></i><i class="cg" style="left:2097px;width:5px"></i><i class="co f" style="left:2104px;width:29px">Job (</i><i class="ci" style="left:2134px;width:5px"></i><i class="cg" style="left:2140px;width:3px"></i><i class="co" style="left:2144px;width:1.5px"></i><i class="cb" style="left:2146px;width:179px">JobRepairPath (0.54ms)</i><i class="ci" style="left:2326px;width:53px">Idle (0.16ms)</i><i class="ci" style="left:2381px;width:21px"></i><i class="cg" style="left:2403px;width:3px"></i><i class="cg d" style="left:2413px;width:28px">dsJo</i><i class="co" style="left:2441px;width:2px"></i><i class="cg" style="left:2444px;width:15px"></i><i class="cg" style="left:2460px;width:6px"></i><i class="ci" style="left:2467px;width:157px">Idle (0.47ms)</i><i class="ci" style="left:2626px;width:19px"></i><i class="co" style="left:2646px;width:2px"></i><i class="cg" style="left:2648px;width:3px"></i><i class="cg" style="left:2653px;width:18px"></i><i class="co" style="left:2675px;width:2px"></i><i class="cg" style="left:2677px;width:3px"></i><i class="cg" style="left:2681px;width:16px"></i><i class="ci" style="left:2699px;width:74px">Idle (0.22ms)</i><i class="ci" style="left:2775px;width:336px">Idle (1.01ms)</i><i class="cdi" style="left:3112px;width:13px"></i></div>
<div class="r" style="top:1004px;height:19px"><i class="cb" style="left:333px;width:99px">ExecuteJobFunction.Invoke() [Invoke] (0.30ms)</i><i class="cb" style="left:1172px;width:157px"></i><i class="cb" style="left:1811px;width:82px"></i><i class="cO g2" style="left:2104px;width:29px">teRa</i><i class="cb" style="left:2146px;width:179px">ExecuteJobFunction.Invoke() [Invoke] (0.54ms)</i><i class="co" style="left:2675px;width:3px"></i></div>
<div class="r n" style="top:1024px;height:4px"><i class="cm" style="left:344px;width:3px"></i><i class="cb" style="left:368px;width:3px"></i><i class="cs1" style="left:376px;width:56px"></i><i class="cb" style="left:2148px;width:178px"></i><i class="co" style="left:2675px;width:3px"></i></div>
<div class="r" style="top:1030px;height:19px"><i class="cdi" style="left:227px;width:26px"></i><i class="ci" style="left:254px;width:79px">Idle (0.24ms)</i><i class="cb" style="left:333px;width:101px">JobRepairPath (0.30ms)</i><i class="ci" style="left:435px;width:98px">Idle (0.29ms)</i><i class="ci" style="left:534px;width:256px">Idle (0.77ms)</i><i class="cb" style="left:793px;width:343px">JobRepairPath (1.03ms)</i><i class="co" style="left:1136px;width:1.5px"></i><i class="cg" style="left:1138px;width:7px"></i><i class="cg" style="left:1147px;width:4px"></i><i class="ci" style="left:1153px;width:181px">Idle (0.55ms)</i><i class="ci" style="left:1336px;width:4px"></i><i class="cg" style="left:1341px;width:19px"></i><i class="ci" style="left:1361px;width:68px">Idle (0.21ms)</i><i class="cg" style="left:1430px;width:347px">JobRVOCalculateNeighbours`1 (Burst) (1.04ms)</i><i class="ci d" style="left:1778px;width:32px">(0.10</i><i class="cg" style="left:1811px;width:95px">JobRVO`1 (Burst) (0.28ms)</i><i class="ci" style="left:1907px;width:61px">Idle (0.18ms)</i><i class="cg d" style="left:1969px;width:40px">OSimul</i><i class="ci" style="left:2010px;width:74px">Idle (0.22ms)</i><i class="cg" style="left:2085px;width:7px"></i><i class="cg" style="left:2097px;width:5px"></i><i class="co f" style="left:2104px;width:29px">Job (</i><i class="ci" style="left:2134px;width:18px"></i><i class="cb" style="left:2153px;width:166px">JobRepairPath (0.50ms)</i><i class="ci" style="left:2320px;width:13px"></i><i class="cb" style="left:2334px;width:2px"></i><i class="cg" style="left:2337px;width:5px"></i><i class="co" style="left:2343px;width:2px"></i><i class="ci d" style="left:2346px;width:39px">Idle (0.12ms)</i><i class="ci" style="left:2387px;width:15px"></i><i class="cg" style="left:2403px;width:3px"></i><i class="cg" style="left:2413px;width:14px"></i><i class="ci" style="left:2429px;width:4px"></i><i class="ci d" style="left:2435px;width:32px">(0.10</i><i class="ci" style="left:2469px;width:155px">Idle (0.47ms)</i><i class="ci" style="left:2626px;width:78px">Idle (0.24ms)</i><i class="ci" style="left:2705px;width:63px">Idle (0.19ms)</i><i class="ci" style="left:2769px;width:342px">Idle (1.03ms)</i><i class="cdi" style="left:3112px;width:13px"></i></div>
<div class="r" style="top:1050px;height:19px"><i class="cb" style="left:334px;width:100px">ExecuteJobFunction.Invoke() [Invoke] (0.30ms)</i><i class="cb" style="left:793px;width:340px">ExecuteJobFunction.Invoke() [Invoke] (1.03ms)</i><i class="cb" style="left:1134px;width:2px"></i><i class="cb" style="left:1811px;width:97px"></i><i class="cO g2" style="left:2104px;width:29px">teRa</i><i class="cb" style="left:2153px;width:165px">ExecuteJobFunction.Invoke() [Invoke] (0.50ms)</i></div>
<div class="r n" style="top:1070px;height:4px"><i class="cm" style="left:347px;width:3px"></i><i class="cs1" style="left:365px;width:18px"></i><i class="cs1" style="left:393px;width:41px"></i><i class="cb" style="left:793px;width:107px"></i><i class="cb" style="left:916px;width:176px"></i><i class="cb" style="left:1094px;width:40px"></i><i class="cb" style="left:2155px;width:113px"></i><i class="cb" style="left:2283px;width:36px"></i></div>
<div class="r" style="top:1076px;height:19px"><i class="cdi" style="left:227px;width:26px"></i><i class="ci" style="left:254px;width:89px">Idle (0.27ms)</i><i class="cb" style="left:343px;width:90px">JobRepairPath (0.27ms)</i><i class="ci" style="left:434px;width:16px"></i><i class="cg" style="left:451px;width:12px"></i><i class="cg" style="left:464px;width:66px">HierarchyLo</i><i class="ci" style="left:531px;width:624px">Idle (1.88ms)</i><i class="ci" style="left:1156px;width:4px"></i><i class="cg" style="left:1162px;width:170px">JobControl (Burst) (0.51ms)</i><i class="ci" style="left:1333px;width:5px"></i><i class="co" style="left:1339px;width:2px"></i><i class="cg" style="left:1341px;width:18px"></i><i class="ci" style="left:1360px;width:61px">Idle (0.18ms)</i><i class="cg" style="left:1422px;width:327px">JobRVOCalculateNeighbours`1 (Burst) (0.98ms)</i><i class="ci d" style="left:1750px;width:46px">Idle (0.14ms)</i><i class="cg" style="left:1797px;width:13px"></i><i class="cg" style="left:1812px;width:83px">JobRVO`1 (Burst) (0.25ms)</i><i class="ci" style="left:1896px;width:57px">Idle (0.17ms)</i><i class="cg e" style="left:1954px;width:55px">VOSimulat</i><i class="ci" style="left:2010px;width:67px">Idle (0.20ms)</i><i class="cg" style="left:2078px;width:13px"></i><i class="cg" style="left:2098px;width:4px"></i><i class="co f" style="left:2104px;width:31px">Job (</i><i class="ci" style="left:2136px;width:16px"></i><i class="cb" style="left:2153px;width:168px">JobRepairPath (0.50ms)</i><i class="ci" style="left:2322px;width:21px"></i><i class="co" style="left:2343px;width:2px"></i><i class="ci d" style="left:2346px;width:36px">Idle (0.11ms)</i><i class="ci" style="left:2384px;width:18px"></i><i class="cg" style="left:2403px;width:3px"></i><i class="ci" style="left:2408px;width:22px"></i><i class="ci" style="left:2431px;width:3px"></i><i class="ci" style="left:2436px;width:7px"></i><i class="cg" style="left:2444px;width:10px"></i><i class="cg" style="left:2456px;width:4px"></i><i class="cg" style="left:2461px;width:2px"></i><i class="cb" style="left:2463px;width:3px"></i><i class="ci" style="left:2467px;width:159px">Idle (0.48ms)</i><i class="ci" style="left:2629px;width:18px"></i><i class="cg" style="left:2648px;width:3px"></i><i class="cg" style="left:2653px;width:19px"></i><i class="co" style="left:2672px;width:2px"></i><i class="cg" style="left:2674px;width:19px"></i><i class="cg" style="left:2695px;width:2px"></i><i class="ci" style="left:2699px;width:71px">Idle (0.21ms)</i><i class="ci" style="left:2772px;width:339px">Idle (1.02ms)</i><i class="cdi" style="left:3112px;width:13px"></i></div>
<div class="r" style="top:1096px;height:19px"><i class="cb" style="left:343px;width:90px">ExecuteJobFunction.Invoke() [Invoke] (0.27ms)</i><i class="cb" style="left:1162px;width:171px"></i><i class="cb" style="left:1811px;width:85px"></i><i class="cO g2" style="left:2105px;width:30px">teRay</i><i class="cb" style="left:2153px;width:168px">ExecuteJobFunction.Invoke() [Invoke] (0.50ms)</i><i class="cb" style="left:2463px;width:3px"></i></div>
<div class="r n" style="top:1116px;height:5px"><i class="cm" style="left:346px;width:3px"></i><i class="cs1" style="left:360px;width:74px"></i><i class="cb" style="left:2155px;width:166px"></i></div>
<div class="r" style="top:1123px;height:19px"><i class="cdi" style="left:227px;width:26px"></i><i class="ci" style="left:254px;width:78px">Idle (0.23ms)</i><i class="cb" style="left:332px;width:101px">JobRepairPath (0.30ms)</i><i class="ci" style="left:434px;width:16px"></i><i class="cg" style="left:451px;width:12px"></i><i class="cg" style="left:464px;width:66px">HierarchyLo</i><i class="ci" style="left:531px;width:264px">Idle (0.79ms)</i><i class="cb" style="left:796px;width:346px">JobRepairPath (1.04ms)</i><i class="cg" style="left:1143px;width:2px"></i><i class="cg" style="left:1147px;width:4px"></i><i class="ci" style="left:1153px;width:7px"></i><i class="cg" style="left:1161px;width:174px">JobControl (Burst) (0.52ms)</i><i class="ci" style="left:1336px;width:3px"></i><i class="cg" style="left:1340px;width:19px"></i><i class="ci" style="left:1360px;width:69px">Idle (0.21ms)</i><i class="cg" style="left:1430px;width:325px">JobRVOCalculateNeighbours`1 (Burst) (0.98ms)</i><i class="ci" style="left:1756px;width:54px">Idle (0.16ms)</i><i class="cg" style="left:1812px;width:85px">JobRVO`1 (Burst) (0.26ms)</i><i class="ci" style="left:1898px;width:70px">Idle (0.21ms)</i><i class="cg d" style="left:1969px;width:38px">OSimul</i><i class="ci" style="left:2008px;width:76px">Idle (0.22ms)</i><i class="cg" style="left:2085px;width:7px"></i><i class="cg" style="left:2097px;width:5px"></i><i class="co f" style="left:2104px;width:30px">Job (</i><i class="ci" style="left:2135px;width:17px"></i><i class="cb" style="left:2153px;width:171px">JobRepairPath (0.51ms)</i><i class="ci" style="left:2325px;width:20px"></i><i class="ci d" style="left:2347px;width:35px">Idle (0.11ms)</i><i class="ci" style="left:2384px;width:18px"></i><i class="co" style="left:2403px;width:2px"></i><i class="cg" style="left:2405px;width:2px"></i><i class="cb" style="left:2409px;width:1.5px"></i><i class="cg" style="left:2413px;width:14px"></i><i class="ci" style="left:2429px;width:14px"></i><i class="cg" style="left:2444px;width:2px"></i><i class="cg" style="left:2447px;width:11px"></i><i class="cb" style="left:2459px;width:2px"></i><i class="cg" style="left:2462px;width:4px"></i><i class="ci" style="left:2467px;width:159px">Idle (0.48ms)</i><i class="ci" style="left:2629px;width:72px">Idle (0.22ms)</i><i class="ci" style="left:2703px;width:408px">Idle (1.22ms)</i><i class="cdi" style="left:3112px;width:13px"></i></div>
<div class="r" style="top:1143px;height:19px"><i class="cb" style="left:332px;width:101px">ExecuteJobFunction.Invoke() [Invoke] (0.30ms)</i><i class="cb" style="left:796px;width:346px">ExecuteJobFunction.Invoke() [Invoke] (1.04ms)</i><i class="cb" style="left:1161px;width:175px"></i><i class="cb" style="left:1811px;width:87px"></i><i class="cO g2" style="left:2104px;width:30px">teRay</i><i class="cb" style="left:2153px;width:171px">ExecuteJobFunction.Invoke() [Invoke] (0.51ms)</i><i class="cr" style="left:2403px;width:2px"></i></div>
<div class="r n" style="top:1163px;height:4px"><i class="cm" style="left:346px;width:3px"></i><i class="cs1" style="left:365px;width:67px"></i><i class="cb" style="left:796px;width:347px"></i><i class="cb" style="left:2155px;width:169px"></i></div>
<div class="r" style="top:1169px;height:19px"><i class="cdi" style="left:227px;width:26px"></i><i class="ci" style="left:254px;width:86px">Idle (0.26ms)</i><i class="cb" style="left:341px;width:94px">JobRepairPath (0.28ms)</i><i class="ci" style="left:436px;width:15px"></i><i class="cg" style="left:452px;width:11px"></i><i class="co" style="left:463px;width:1.5px"></i><i class="cg" style="left:464.5px;width:65.5px">HierarchyLo</i><i class="ci" style="left:531px;width:624px">Idle (1.87ms)</i><i class="ci" style="left:1156px;width:4px"></i><i class="cg" style="left:1162px;width:166px">JobControl (Burst) (0.50ms)</i><i class="ci" style="left:1329px;width:11px"></i><i class="cg" style="left:1341px;width:18px"></i><i class="ci" style="left:1360px;width:61px">Idle (0.18ms)</i><i class="cg" style="left:1422px;width:330px">JobRVOCalculateNeighbours`1 (Burst) (0.99ms)</i><i class="ci" style="left:1753px;width:57px">Idle (0.17ms)</i><i class="cg" style="left:1812px;width:80px">JobRVO`1 (Burst) (0.24ms)</i><i class="ci" style="left:1893px;width:61px">Idle (0.18ms)</i><i class="cg e" style="left:1955px;width:57px">VOSimulat</i><i class="co" style="left:2012px;width:1.5px"></i><i class="cg" style="left:2013.5px;width:7.5px"></i><i class="co" style="left:2021px;width:1.5px"></i><i class="cg d" style="left:2022.5px;width:45.5px">ementDi</i><i class="cg" style="left:2070px;width:22px"></i><i class="cg" style="left:2098px;width:4px"></i><i class="co f" style="left:2104px;width:29px">Job (</i><i class="cg" style="left:2139px;width:4px"></i><i class="cb" style="left:2145px;width:184px">JobRepairPath (0.55ms)</i><i class="ci e" style="left:2330px;width:49px">Idle (0.15ms)</i><i class="ci d" style="left:2381px;width:28px">(0.09</i><i class="ci" style="left:2410px;width:2px"></i><i class="cg" style="left:2413px;width:14px"></i><i class="ci" style="left:2429px;width:14px"></i><i class="cg" style="left:2444px;width:7px"></i><i class="cg" style="left:2452px;width:8px"></i><i class="cg" style="left:2461px;width:4px"></i><i class="ci" style="left:2467px;width:159px">Idle (0.48ms)</i><i class="co" style="left:2627px;width:2px"></i><i class="ci d" style="left:2630px;width:43px">Idle (0.13ms)</i><i class="cg" style="left:2674px;width:6px"></i><i class="cg" style="left:2681px;width:5px"></i><i class="cg" style="left:2688px;width:4px"></i><i class="ci" style="left:2693px;width:8px"></i><i class="ci" style="left:2703px;width:408px">Idle (1.23ms)</i><i class="cdi" style="left:3112px;width:13px"></i></div>
<div class="r" style="top:1189px;height:19px"><i class="cb" style="left:341px;width:94px">ExecuteJobFunction.Invoke() [Invoke] (0.28ms)</i><i class="cb" style="left:1162px;width:167px"></i><i class="cb" style="left:1811px;width:82px"></i><i class="cO g2" style="left:2105px;width:28px">teRa</i><i class="cb" style="left:2146px;width:182px">ExecuteJobFunction.Invoke() [Invoke] (0.56ms)</i><i class="cr" style="left:2627px;width:2px"></i></div>
<div class="r n" style="top:1209px;height:4px"><i class="cm" style="left:343px;width:4px"></i><i class="cb" style="left:363px;width:3px"></i><i class="cs1" style="left:370px;width:43px"></i><i class="cs1" style="left:417px;width:18px"></i><i class="cb" style="left:2148px;width:181px"></i></div>
<div class="r n" style="top:1375px;height:10px"><i class="cda" style="left:227px;width:26px"></i><i class="ca" style="left:254px;width:2857px"></i><i class="cda" style="left:3112px;width:13px"></i></div>
<div style="left:1600px;top:1375px;width:164px;height:10px;overflow:hidden"><div style="left:0;top:3px;width:164px;text-align:center;font-size:13px;color:#d8d8d8;line-height:14px">Audio Thread (8.59ms)</div></div>
<div style="left:1293px;top:1388px;width:2.5px;height:10px;background:#48874f"></div>
<div class="r" style="top:1425px;height:19px"><i class="cb" style="left:782.6px;width:6.8px"></i><i class="cb" style="left:791px;width:27.3px"></i><i class="cb" style="left:819px;width:3.4px"></i><i class="cb" style="left:822.4px;width:11.6px"></i><i class="cb" style="left:835px;width:6.8px"></i><i class="cb" style="left:843px;width:7.2px"></i><i class="cb" style="left:851.4px;width:1.7px"></i><i class="cb" style="left:854.3px;width:10.4px"></i><i class="cb" style="left:865.4px;width:2.2px"></i><i class="cb" style="left:868.3px;width:8.9px"></i><i class="cb" style="left:878px;width:6px"></i><i class="cb" style="left:974px;width:2.2px"></i></div>
<div class="r" style="top:1445px;height:19px"><i class="cb" style="left:782.6px;width:2.4px"></i><i class="cb" style="left:785.7px;width:3.6px"></i><i class="cb" style="left:791px;width:93.4px"></i><i class="cb" style="left:973.1px;width:3.9px"></i></div>
<div class="r" style="top:1471px;height:19px"><i class="cb" style="left:886.9px;width:26.1px"></i><i class="cb" style="left:914.2px;width:4.8px"></i><i class="cb" style="left:919.7px;width:43.5px"></i><i class="cb" style="left:966.8px;width:2.2px"></i><i class="cb" style="left:969.7px;width:2.9px"></i></div>
<div class="r" style="top:1491px;height:19px"><i class="cb" style="left:886.4px;width:77.5px"></i><i class="cb" style="left:966.1px;width:7px"></i></div>
<div class="r" style="top:1517px;height:19px"><i class="cb" style="left:786.2px;width:9.7px"></i><i class="cb" style="left:797.1px;width:4.8px"></i><i class="cb" style="left:803.1px;width:18.1px"></i><i class="cb" style="left:821.9px;width:14.2px"></i><i class="cb" style="left:837.4px;width:3.9px"></i><i class="cb" style="left:842.2px;width:6.8px"></i><i class="cb" style="left:850.2px;width:7.2px"></i><i class="cb" style="left:858.2px;width:13px"></i><i class="cb" style="left:871.9px;width:10.9px"></i><i class="cb" style="left:966.1px;width:7.7px"></i></div>
<div class="r" style="top:1538px;height:19px"><i class="cb" style="left:786.9px;width:1.7px"></i><i class="cb" style="left:789.4px;width:94.6px"></i><i class="cb" style="left:965.1px;width:9.4px"></i></div>
<div class="r" style="top:1564px;height:19px"><i class="cb" style="left:789.1px;width:4.8px"></i><i class="cb" style="left:1155.1px;width:4.6px"></i></div>
<div class="r" style="top:1584px;height:19px"><i class="cb" style="left:789.4px;width:5.1px"></i><i class="cb" style="left:1154.4px;width:5.3px"></i></div>
<div class="r" style="top:1610px;height:19px"><i class="cb" style="left:797.1px;width:10.9px"></i><i class="cb" style="left:809.6px;width:12.8px"></i><i class="cb" style="left:822.4px;width:26.6px"></i><i class="cb" style="left:849.7px;width:7.7px"></i><i class="cb" style="left:858.2px;width:4.6px"></i><i class="cb" style="left:864px;width:12.1px"></i><i class="cb" style="left:876.8px;width:6px"></i><i class="cb" style="left:885.7px;width:33.3px"></i><i class="cb" style="left:920.9px;width:5.3px"></i><i class="cb" style="left:926.7px;width:12.8px"></i><i class="cb" style="left:940px;width:19.3px"></i><i class="cb" style="left:960px;width:4.8px"></i><i class="cb" style="left:968px;width:6px"></i></div>
<div class="r" style="top:1631px;height:19px"><i class="cb" style="left:796.1px;width:87.9px"></i><i class="cb" style="left:885.2px;width:34.3px"></i><i class="cb" style="left:920.9px;width:45.1px"></i><i class="cb" style="left:967.8px;width:6.8px"></i></div>
<div class="r" style="top:1657px;height:19px"><i class="cb" style="left:785px;width:5.1px"></i><i class="cb" style="left:793px;width:2.2px"></i><i class="cb" style="left:795.9px;width:16.2px"></i><i class="cb" style="left:813.3px;width:1.9px"></i><i class="cb" style="left:815.9px;width:7px"></i><i class="cb" style="left:824.1px;width:2.7px"></i><i class="cb" style="left:827.7px;width:6.8px"></i><i class="cb" style="left:835.2px;width:9.7px"></i><i class="cb" style="left:846.1px;width:13px"></i><i class="cb" style="left:859.9px;width:7.7px"></i><i class="cb" style="left:868.3px;width:8.5px"></i><i class="cb" style="left:878px;width:6.5px"></i><i class="cb" style="left:887.6px;width:2.4px"></i><i class="cb" style="left:891px;width:28px"></i><i class="cb" style="left:920.2px;width:4.8px"></i><i class="cb" style="left:926.2px;width:6.5px"></i><i class="cb" style="left:934px;width:13.3px"></i><i class="cb" style="left:948px;width:12.1px"></i><i class="cb" style="left:960.8px;width:2.4px"></i><i class="cb" style="left:968px;width:4.6px"></i></div>
<div class="r" style="top:1677px;height:19px"><i class="cb" style="left:785px;width:5.6px"></i><i class="cb" style="left:793px;width:91.7px"></i><i class="cb" style="left:888.1px;width:75.8px"></i><i class="cb" style="left:967.8px;width:6.3px"></i></div>
<div style="left:911.3px;top:1511.5px;width:2.7px;height:3px;background:#9c1d4b"></div>
<div style="left:913px;top:1696px;width:2.7px;height:2px;background:#9c1d4b"></div>
<svg style="position:absolute;left:0;top:0" width="3125" height="1698"><rect x="237" y="45.5" width="1" height="2.5" fill="#606060"/><rect x="254" y="38" width="1" height="10" fill="#8e8e8e"/><rect x="270" y="45.5" width="1" height="2.5" fill="#606060"/><rect x="287" y="43" width="1" height="5" fill="#6c6c6c"/><rect x="303" y="45.5" width="1" height="2.5" fill="#606060"/><rect x="320" y="43" width="1" height="5" fill="#6c6c6c"/><rect x="337" y="45.5" width="1" height="2.5" fill="#606060"/><rect x="353" y="43" width="1" height="5" fill="#6c6c6c"/><rect x="370" y="45.5" width="1" height="2.5" fill="#606060"/><rect x="387" y="43" width="1" height="5" fill="#6c6c6c"/><rect x="403" y="45.5" width="1" height="2.5" fill="#606060"/><rect x="420" y="38" width="1" height="10" fill="#8e8e8e"/><rect x="420" y="49" width="1" height="1649" fill="#fff" fill-opacity=".06"/><rect x="436" y="45.5" width="1" height="2.5" fill="#606060"/><rect x="453" y="43" width="1" height="5" fill="#6c6c6c"/><rect x="470" y="45.5" width="1" height="2.5" fill="#606060"/><rect x="486" y="43" width="1" height="5" fill="#6c6c6c"/><rect x="503" y="45.5" width="1" height="2.5" fill="#606060"/><rect x="520" y="43" width="1" height="5" fill="#6c6c6c"/><rect x="536" y="45.5" width="1" height="2.5" fill="#606060"/><rect x="553" y="43" width="1" height="5" fill="#6c6c6c"/><rect x="569" y="45.5" width="1" height="2.5" fill="#606060"/><rect x="586" y="38" width="1" height="10" fill="#8e8e8e"/><rect x="586" y="49" width="1" height="1649" fill="#fff" fill-opacity=".06"/><rect x="603" y="45.5" width="1" height="2.5" fill="#606060"/><rect x="619" y="43" width="1" height="5" fill="#6c6c6c"/><rect x="636" y="45.5" width="1" height="2.5" fill="#606060"/><rect x="653" y="43" width="1" height="5" fill="#6c6c6c"/><rect x="669" y="45.5" width="1" height="2.5" fill="#606060"/><rect x="686" y="43" width="1" height="5" fill="#6c6c6c"/><rect x="703" y="45.5" width="1" height="2.5" fill="#606060"/><rect x="719" y="43" width="1" height="5" fill="#6c6c6c"/><rect x="736" y="45.5" width="1" height="2.5" fill="#606060"/><rect x="752" y="38" width="1" height="10" fill="#8e8e8e"/><rect x="752" y="49" width="1" height="1649" fill="#fff" fill-opacity=".06"/><rect x="769" y="45.5" width="1" height="2.5" fill="#606060"/><rect x="786" y="43" width="1" height="5" fill="#6c6c6c"/><rect x="802" y="45.5" width="1" height="2.5" fill="#606060"/><rect x="819" y="43" width="1" height="5" fill="#6c6c6c"/><rect x="836" y="45.5" width="1" height="2.5" fill="#606060"/><rect x="852" y="43" width="1" height="5" fill="#6c6c6c"/><rect x="869" y="45.5" width="1" height="2.5" fill="#606060"/><rect x="885" y="43" width="1" height="5" fill="#6c6c6c"/><rect x="902" y="45.5" width="1" height="2.5" fill="#606060"/><rect x="919" y="38" width="1" height="10" fill="#8e8e8e"/><rect x="919" y="49" width="1" height="1649" fill="#fff" fill-opacity=".06"/><rect x="935" y="45.5" width="1" height="2.5" fill="#606060"/><rect x="952" y="43" width="1" height="5" fill="#6c6c6c"/><rect x="969" y="45.5" width="1" height="2.5" fill="#606060"/><rect x="985" y="43" width="1" height="5" fill="#6c6c6c"/><rect x="1002" y="45.5" width="1" height="2.5" fill="#606060"/><rect x="1018" y="43" width="1" height="5" fill="#6c6c6c"/><rect x="1035" y="45.5" width="1" height="2.5" fill="#606060"/><rect x="1052" y="43" width="1" height="5" fill="#6c6c6c"/><rect x="1068" y="45.5" width="1" height="2.5" fill="#606060"/><rect x="1085" y="38" width="1" height="10" fill="#8e8e8e"/><rect x="1085" y="49" width="1" height="1649" fill="#fff" fill-opacity=".06"/><rect x="1102" y="45.5" width="1" height="2.5" fill="#606060"/><rect x="1118" y="43" width="1" height="5" fill="#6c6c6c"/><rect x="1135" y="45.5" width="1" height="2.5" fill="#606060"/><rect x="1152" y="43" width="1" height="5" fill="#6c6c6c"/><rect x="1168" y="45.5" width="1" height="2.5" fill="#606060"/><rect x="1185" y="43" width="1" height="5" fill="#6c6c6c"/><rect x="1201" y="45.5" width="1" height="2.5" fill="#606060"/><rect x="1218" y="43" width="1" height="5" fill="#6c6c6c"/><rect x="1235" y="45.5" width="1" height="2.5" fill="#606060"/><rect x="1251" y="38" width="1" height="10" fill="#8e8e8e"/><rect x="1251" y="49" width="1" height="1649" fill="#fff" fill-opacity=".06"/><rect x="1268" y="45.5" width="1" height="2.5" fill="#606060"/><rect x="1285" y="43" width="1" height="5" fill="#6c6c6c"/><rect x="1301" y="45.5" width="1" height="2.5" fill="#606060"/><rect x="1318" y="43" width="1" height="5" fill="#6c6c6c"/><rect x="1334" y="45.5" width="1" height="2.5" fill="#606060"/><rect x="1351" y="43" width="1" height="5" fill="#6c6c6c"/><rect x="1368" y="45.5" width="1" height="2.5" fill="#606060"/><rect x="1384" y="43" width="1" height="5" fill="#6c6c6c"/><rect x="1401" y="45.5" width="1" height="2.5" fill="#606060"/><rect x="1418" y="38" width="1" height="10" fill="#8e8e8e"/><rect x="1418" y="49" width="1" height="1649" fill="#fff" fill-opacity=".06"/><rect x="1434" y="45.5" width="1" height="2.5" fill="#606060"/><rect x="1451" y="43" width="1" height="5" fill="#6c6c6c"/><rect x="1467" y="45.5" width="1" height="2.5" fill="#606060"/><rect x="1484" y="43" width="1" height="5" fill="#6c6c6c"/><rect x="1501" y="45.5" width="1" height="2.5" fill="#606060"/><rect x="1517" y="43" width="1" height="5" fill="#6c6c6c"/><rect x="1534" y="45.5" width="1" height="2.5" fill="#606060"/><rect x="1551" y="43" width="1" height="5" fill="#6c6c6c"/><rect x="1567" y="45.5" width="1" height="2.5" fill="#606060"/><rect x="1584" y="38" width="1" height="10" fill="#8e8e8e"/><rect x="1584" y="49" width="1" height="1649" fill="#fff" fill-opacity=".06"/><rect x="1601" y="45.5" width="1" height="2.5" fill="#606060"/><rect x="1617" y="43" width="1" height="5" fill="#6c6c6c"/><rect x="1634" y="45.5" width="1" height="2.5" fill="#606060"/><rect x="1650" y="43" width="1" height="5" fill="#6c6c6c"/><rect x="1667" y="45.5" width="1" height="2.5" fill="#606060"/><rect x="1684" y="43" width="1" height="5" fill="#6c6c6c"/><rect x="1700" y="45.5" width="1" height="2.5" fill="#606060"/><rect x="1717" y="43" width="1" height="5" fill="#6c6c6c"/><rect x="1734" y="45.5" width="1" height="2.5" fill="#606060"/><rect x="1750" y="38" width="1" height="10" fill="#8e8e8e"/><rect x="1750" y="49" width="1" height="1649" fill="#fff" fill-opacity=".06"/><rect x="1767" y="45.5" width="1" height="2.5" fill="#606060"/><rect x="1783" y="43" width="1" height="5" fill="#6c6c6c"/><rect x="1800" y="45.5" width="1" height="2.5" fill="#606060"/><rect x="1817" y="43" width="1" height="5" fill="#6c6c6c"/><rect x="1833" y="45.5" width="1" height="2.5" fill="#606060"/><rect x="1850" y="43" width="1" height="5" fill="#6c6c6c"/><rect x="1867" y="45.5" width="1" height="2.5" fill="#606060"/><rect x="1883" y="43" width="1" height="5" fill="#6c6c6c"/><rect x="1900" y="45.5" width="1" height="2.5" fill="#606060"/><rect x="1916" y="38" width="1" height="10" fill="#8e8e8e"/><rect x="1916" y="49" width="1" height="1649" fill="#fff" fill-opacity=".06"/><rect x="1933" y="45.5" width="1" height="2.5" fill="#606060"/><rect x="1950" y="43" width="1" height="5" fill="#6c6c6c"/><rect x="1966" y="45.5" width="1" height="2.5" fill="#606060"/><rect x="1983" y="43" width="1" height="5" fill="#6c6c6c"/><rect x="2000" y="45.5" width="1" height="2.5" fill="#606060"/><rect x="2016" y="43" width="1" height="5" fill="#6c6c6c"/><rect x="2033" y="45.5" width="1" height="2.5" fill="#606060"/><rect x="2050" y="43" width="1" height="5" fill="#6c6c6c"/><rect x="2066" y="45.5" width="1" height="2.5" fill="#606060"/><rect x="2083" y="38" width="1" height="10" fill="#8e8e8e"/><rect x="2083" y="49" width="1" height="1649" fill="#fff" fill-opacity=".06"/><rect x="2099" y="45.5" width="1" height="2.5" fill="#606060"/><rect x="2116" y="43" width="1" height="5" fill="#6c6c6c"/><rect x="2133" y="45.5" width="1" height="2.5" fill="#606060"/><rect x="2149" y="43" width="1" height="5" fill="#6c6c6c"/><rect x="2166" y="45.5" width="1" height="2.5" fill="#606060"/><rect x="2183" y="43" width="1" height="5" fill="#6c6c6c"/><rect x="2199" y="45.5" width="1" height="2.5" fill="#606060"/><rect x="2216" y="43" width="1" height="5" fill="#6c6c6c"/><rect x="2232" y="45.5" width="1" height="2.5" fill="#606060"/><rect x="2249" y="38" width="1" height="10" fill="#8e8e8e"/><rect x="2249" y="49" width="1" height="1649" fill="#fff" fill-opacity=".06"/><rect x="2266" y="45.5" width="1" height="2.5" fill="#606060"/><rect x="2282" y="43" width="1" height="5" fill="#6c6c6c"/><rect x="2299" y="45.5" width="1" height="2.5" fill="#606060"/><rect x="2316" y="43" width="1" height="5" fill="#6c6c6c"/><rect x="2332" y="45.5" width="1" height="2.5" fill="#606060"/><rect x="2349" y="43" width="1" height="5" fill="#6c6c6c"/><rect x="2366" y="45.5" width="1" height="2.5" fill="#606060"/><rect x="2382" y="43" width="1" height="5" fill="#6c6c6c"/><rect x="2399" y="45.5" width="1" height="2.5" fill="#606060"/><rect x="2415" y="38" width="1" height="10" fill="#8e8e8e"/><rect x="2415" y="49" width="1" height="1649" fill="#fff" fill-opacity=".06"/><rect x="2432" y="45.5" width="1" height="2.5" fill="#606060"/><rect x="2449" y="43" width="1" height="5" fill="#6c6c6c"/><rect x="2465" y="45.5" width="1" height="2.5" fill="#606060"/><rect x="2482" y="43" width="1" height="5" fill="#6c6c6c"/><rect x="2499" y="45.5" width="1" height="2.5" fill="#606060"/><rect x="2515" y="43" width="1" height="5" fill="#6c6c6c"/><rect x="2532" y="45.5" width="1" height="2.5" fill="#606060"/><rect x="2548" y="43" width="1" height="5" fill="#6c6c6c"/><rect x="2565" y="45.5" width="1" height="2.5" fill="#606060"/><rect x="2582" y="38" width="1" height="10" fill="#8e8e8e"/><rect x="2582" y="49" width="1" height="1649" fill="#fff" fill-opacity=".06"/><rect x="2598" y="45.5" width="1" height="2.5" fill="#606060"/><rect x="2615" y="43" width="1" height="5" fill="#6c6c6c"/><rect x="2632" y="45.5" width="1" height="2.5" fill="#606060"/><rect x="2648" y="43" width="1" height="5" fill="#6c6c6c"/><rect x="2665" y="45.5" width="1" height="2.5" fill="#606060"/><rect x="2681" y="43" width="1" height="5" fill="#6c6c6c"/><rect x="2698" y="45.5" width="1" height="2.5" fill="#606060"/><rect x="2715" y="43" width="1" height="5" fill="#6c6c6c"/><rect x="2731" y="45.5" width="1" height="2.5" fill="#606060"/><rect x="2748" y="38" width="1" height="10" fill="#8e8e8e"/><rect x="2748" y="49" width="1" height="1649" fill="#fff" fill-opacity=".06"/><rect x="2765" y="45.5" width="1" height="2.5" fill="#606060"/><rect x="2781" y="43" width="1" height="5" fill="#6c6c6c"/><rect x="2798" y="45.5" width="1" height="2.5" fill="#606060"/><rect x="2815" y="43" width="1" height="5" fill="#6c6c6c"/><rect x="2831" y="45.5" width="1" height="2.5" fill="#606060"/><rect x="2848" y="43" width="1" height="5" fill="#6c6c6c"/><rect x="2864" y="45.5" width="1" height="2.5" fill="#606060"/><rect x="2881" y="43" width="1" height="5" fill="#6c6c6c"/><rect x="2898" y="45.5" width="1" height="2.5" fill="#606060"/><rect x="2914" y="38" width="1" height="10" fill="#8e8e8e"/><rect x="2914" y="49" width="1" height="1649" fill="#fff" fill-opacity=".06"/><rect x="2931" y="45.5" width="1" height="2.5" fill="#606060"/><rect x="2948" y="43" width="1" height="5" fill="#6c6c6c"/><rect x="2964" y="45.5" width="1" height="2.5" fill="#606060"/><rect x="2981" y="43" width="1" height="5" fill="#6c6c6c"/><rect x="2997" y="45.5" width="1" height="2.5" fill="#606060"/><rect x="3014" y="43" width="1" height="5" fill="#6c6c6c"/><rect x="3031" y="45.5" width="1" height="2.5" fill="#606060"/><rect x="3047" y="43" width="1" height="5" fill="#6c6c6c"/><rect x="3064" y="45.5" width="1" height="2.5" fill="#606060"/><rect x="3081" y="38" width="1" height="10" fill="#8e8e8e"/><rect x="3081" y="49" width="1" height="1649" fill="#fff" fill-opacity=".06"/><rect x="3097" y="45.5" width="1" height="2.5" fill="#606060"/><rect x="3114" y="43" width="1" height="5" fill="#6c6c6c"/><rect x="253" y="29" width="1" height="1669" fill="#8e8e8e"/><rect x="3110" y="29" width="1" height="1669" fill="#8a8a8a"/><text x="257.5" y="43.6" font-family="Liberation Sans, sans-serif" font-size="12.7" fill="#c4c4c4">0.0ms</text><text x="423.8" y="43.6" font-family="Liberation Sans, sans-serif" font-size="12.7" fill="#c4c4c4">0.5ms</text><text x="590.1" y="43.6" font-family="Liberation Sans, sans-serif" font-size="12.7" fill="#c4c4c4">1.0ms</text><text x="756.4" y="43.6" font-family="Liberation Sans, sans-serif" font-size="12.7" fill="#c4c4c4">1.5ms</text><text x="922.7" y="43.6" font-family="Liberation Sans, sans-serif" font-size="12.7" fill="#c4c4c4">2.0ms</text><text x="1089" y="43.6" font-family="Liberation Sans, sans-serif" font-size="12.7" fill="#c4c4c4">2.5ms</text><text x="1255.3" y="43.6" font-family="Liberation Sans, sans-serif" font-size="12.7" fill="#c4c4c4">3.0ms</text><text x="1421.6" y="43.6" font-family="Liberation Sans, sans-serif" font-size="12.7" fill="#c4c4c4">3.5ms</text><text x="1587.9" y="43.6" font-family="Liberation Sans, sans-serif" font-size="12.7" fill="#c4c4c4">4.0ms</text><text x="1754.2" y="43.6" font-family="Liberation Sans, sans-serif" font-size="12.7" fill="#c4c4c4">4.5ms</text><text x="1920.5" y="43.6" font-family="Liberation Sans, sans-serif" font-size="12.7" fill="#c4c4c4">5.0ms</text><text x="2086.8" y="43.6" font-family="Liberation Sans, sans-serif" font-size="12.7" fill="#c4c4c4">5.5ms</text><text x="2253.1" y="43.6" font-family="Liberation Sans, sans-serif" font-size="12.7" fill="#c4c4c4">6.0ms</text><text x="2419.4" y="43.6" font-family="Liberation Sans, sans-serif" font-size="12.7" fill="#c4c4c4">6.5ms</text><text x="2585.7" y="43.6" font-family="Liberation Sans, sans-serif" font-size="12.7" fill="#c4c4c4">7.0ms</text><text x="2752" y="43.6" font-family="Liberation Sans, sans-serif" font-size="12.7" fill="#c4c4c4">7.5ms</text><text x="2918.3" y="43.6" font-family="Liberation Sans, sans-serif" font-size="12.7" fill="#c4c4c4">8.0ms</text><text x="3084.6" y="43.6" font-family="Liberation Sans, sans-serif" font-size="12.7" fill="#c4c4c4">8.5ms</text></svg>
<div class="lb" style="left:25px;top:52px">Main Thread</div>
<div class="lb" style="left:25px;top:367.5px">Render Thread</div>
<div class="lb" style="left:25px;top:434px">Job</div>
<div class="tri" style="left:8px;top:437.5px;border-left:6px solid transparent;border-right:6px solid transparent;border-top:10px solid #6e6e6e"></div>
<div class="lb" style="left:37px;top:459.7px">Worker 0</div>
<div class="lb" style="left:37px;top:506.2px">Worker 1</div>
<div class="lb" style="left:37px;top:614.7px">Worker 2</div>
<div class="lb" style="left:37px;top:661.1px">Worker 3</div>
<div class="lb" style="left:37px;top:707.4px">Worker 4</div>
<div class="lb" style="left:37px;top:753.8px">Worker 5</div>
<div class="lb" style="left:37px;top:800.1px">Worker 6</div>
<div class="lb" style="left:37px;top:846.5px">Worker 7</div>
<div class="lb" style="left:37px;top:892.9px">Worker 8</div>
<div class="lb" style="left:37px;top:939.2px">Worker 9</div>
<div class="lb" style="left:37px;top:985.6px">Worker 10</div>
<div class="lb" style="left:37px;top:1031.9px">Worker 11</div>
<div class="lb" style="left:37px;top:1078.3px">Worker 12</div>
<div class="lb" style="left:37px;top:1124.7px">Worker 13</div>
<div class="lb" style="left:37px;top:1171px">Worker 14</div>
<div class="lb" style="left:25px;top:1217.2px">Loading</div>
<div class="tri" style="left:9px;top:1219.2px;border-top:6px solid transparent;border-bottom:6px solid transparent;border-left:10px solid #6e6e6e"></div>
<div class="lb" style="left:25px;top:1242.1px">Scripting Threads</div>
<div class="tri" style="left:9px;top:1244.1px;border-top:6px solid transparent;border-bottom:6px solid transparent;border-left:10px solid #6e6e6e"></div>
<div class="lb" style="left:25px;top:1267px">Background Job</div>
<div class="tri" style="left:9px;top:1269px;border-top:6px solid transparent;border-bottom:6px solid transparent;border-left:10px solid #6e6e6e"></div>
<div class="lb" style="left:25px;top:1306.8px">Profiler</div>
<div class="tri" style="left:9px;top:1308.8px;border-top:6px solid transparent;border-bottom:6px solid transparent;border-left:10px solid #6e6e6e"></div>
<div class="lb" style="left:25px;top:1332.1px">Other Threads</div>
<div class="tri" style="left:9px;top:1334.1px;border-top:6px solid transparent;border-bottom:6px solid transparent;border-left:10px solid #6e6e6e"></div>
<div class="lb" style="left:25px;top:1376.9px">Audio</div>
<div class="tri" style="left:9px;top:1378.9px;border-top:6px solid transparent;border-bottom:6px solid transparent;border-left:10px solid #6e6e6e"></div>
<div class="lb" style="left:25px;top:1402.2px">Pathfinding</div>
<div class="tri" style="left:8px;top:1405.7px;border-left:6px solid transparent;border-right:6px solid transparent;border-top:10px solid #6e6e6e"></div>
<div class="lb" style="left:37.4px;top:1427.1px">Pathfinding thread #1</div>
<div class="lb" style="left:37.4px;top:1473.4px">Pathfinding thread #2</div>
<div class="lb" style="left:37.4px;top:1519.7px">Pathfinding thread #3</div>
<div class="lb" style="left:37.4px;top:1566.3px">Pathfinding thread #4</div>
<div class="lb" style="left:37.4px;top:1612.7px">Pathfinding thread #5</div>
<div class="lb" style="left:37.4px;top:1659.3px">Pathfinding thread #6</div>
<div class="ab up" style="top:347px"></div>
<div class="ab" style="top:413px"></div>
<div class="ab" style="top:485px"></div>
<div class="ab up" style="top:593px"></div>
<div class="ab" style="top:640px"></div>
<div class="ab" style="top:686px"></div>
<div class="ab" style="top:733px"></div>
<div class="ab" style="top:779px"></div>
<div class="ab" style="top:825px"></div>
<div class="ab" style="top:872px"></div>
<div class="ab" style="top:918px"></div>
<div class="ab" style="top:965px"></div>
<div class="ab" style="top:1011px"></div>
<div class="ab" style="top:1057px"></div>
<div class="ab" style="top:1104px"></div>
<div class="ab" style="top:1150px"></div>
<div class="ab" style="top:1197px"></div>
<div class="ab" style="top:1453px"></div>
<div class="ab" style="top:1499px"></div>
<div class="ab" style="top:1545px"></div>
<div class="ab" style="top:1592px"></div>
<div class="ab" style="top:1638px"></div>
<div class="ab" style="top:1685px"></div>
<div class="an" style="left:692.5px;top:260px;font-size:15px;transform:translateX(-50%)">Schedule path calculations</div>
<div class="ln" style="left:602px;top:257px;width:180px"></div>
<div class="dm" style="left:598px;top:254px"></div>
<div class="dm" style="left:778px;top:254px"></div>
<div class="an" style="left:268.6px;top:420px">Handle finished path calculations</div>
<div class="ln" style="left:325px;top:446.2px;width:128.4px"></div>
<div class="dm" style="left:321px;top:443.2px"></div>
<div class="dm" style="left:449.4px;top:443.2px"></div>
<div class="an" style="left:910px;top:420px">Path repair</div>
<div class="ln" style="left:779.5px;top:446.2px;width:365.5px"></div>
<div class="dm" style="left:775.5px;top:443.2px"></div>
<div class="dm" style="left:1141px;top:443.2px"></div>
<div class="an" style="left:1153.4px;top:420px">Movement calculations</div>
<div class="ln" style="left:1155.6px;top:446.2px;width:214.9px"></div>
<div class="dm" style="left:1151.6px;top:443.2px"></div>
<div class="dm" style="left:1366.5px;top:443.2px"></div>
<div class="an" style="left:1482.5px;top:420px">Local avoidance</div>
<div class="ln" style="left:1420px;top:446.2px;width:595px"></div>
<div class="dm" style="left:1416px;top:443.2px"></div>
<div class="dm" style="left:2011px;top:443.2px"></div>
<div class="an" style="left:1912px;top:401px">Gravity and final movement</div>
<div class="ln" style="left:2073.6px;top:446.2px;width:71.4px"></div>
<div class="dm" style="left:2069.6px;top:443.2px"></div>
<div class="dm" style="left:2141px;top:443.2px"></div>
<div class="an" style="left:2159px;top:420px">Repair path post movement</div>
<div class="ln" style="left:2155px;top:446.2px;width:174px"></div>
<div class="dm" style="left:2151px;top:443.2px"></div>
<div class="dm" style="left:2325px;top:443.2px"></div>
<div class="an" style="left:790.6px;top:1386px">Pathfinding calculations</div>
<div class="ln" style="left:779.7px;top:1412px;width:393.3px"></div>
<div class="dm" style="left:775.7px;top:1409px"></div>
<div class="dm" style="left:1169px;top:1409px"></div>
<svg style="position:absolute;left:2000px;top:415px" width="140" height="40"><path d="M26 9 C30 24,60 22,90 24 C102 25,108 28,112 32" fill="none" stroke="#fff" stroke-width="2"/></svg>
</div></body></html>
